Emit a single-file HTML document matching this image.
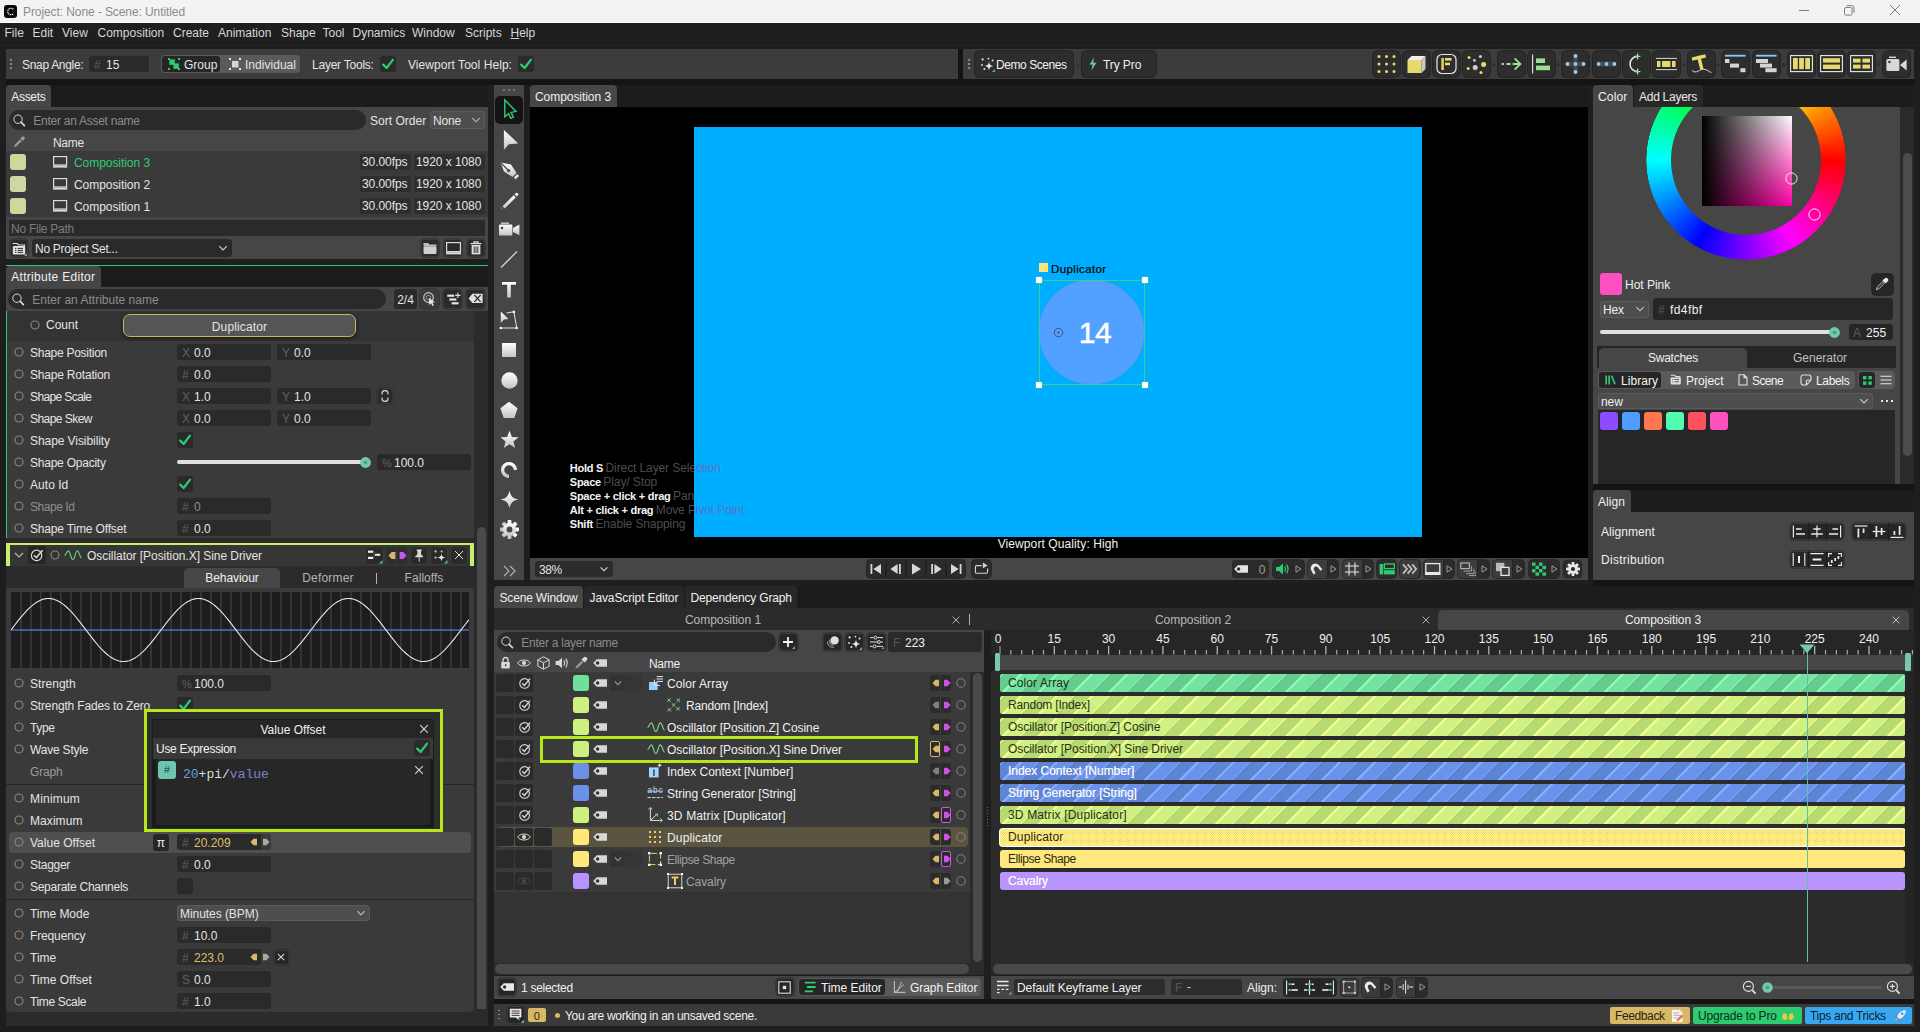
<!DOCTYPE html>
<html><head><meta charset="utf-8"><title>Cavalry</title>
<style>
html,body{margin:0;padding:0;}
body{width:1920px;height:1032px;background:#1e1e1e;position:relative;overflow:hidden;font-family:"Liberation Sans",sans-serif;font-size:12px;}
.b{position:absolute;box-sizing:border-box;display:block;}
.t{position:absolute;white-space:nowrap;line-height:16px;height:16px;font-size:12px;}
u{text-decoration:underline;text-underline-offset:1px;}
</style></head>
<body>
<!-- top -->
<div class="b" style="left:0px;top:0px;width:1920px;height:23px;background:#f3f3f3;"></div>
<svg class="b" style="left:4px;top:5px;" width="13" height="13" viewBox="0 0 13 13"><rect width="13" height="13" rx="3" fill="#0a0a0a"/><path d="M9.3 4.3 A3.2 3.2 0 1 0 9.3 8.7" fill="none" stroke="#fff" stroke-width="1.3" stroke-dasharray="1.2 0.7"/></svg>
<div class="t" style="top:3.5px;color:#8b8b8b;left:23px;letter-spacing:-0.089px;">Project: None - Scene: Untitled</div>
<div class="b" style="left:0px;top:22.3px;width:1920px;height:0.9px;background:#ffffff;"></div>
<svg class="b" style="left:1798px;top:5px;" width="12" height="12" viewBox="0 0 12 12"><path d="M1 5.5 H11" stroke="#7a7a7a" stroke-width="1"/></svg>
<svg class="b" style="left:1843px;top:4px;" width="12" height="12" viewBox="0 0 12 12"><rect x="1.5" y="3.5" width="7.6" height="7.6" rx="1.6" fill="none" stroke="#7a7a7a" stroke-width="1"/><path d="M3.6 1.6 H8.6 A2.4 2.4 0 0 1 11 4 V8.6" fill="none" stroke="#7a7a7a" stroke-width="1"/></svg>
<svg class="b" style="left:1889px;top:4px;" width="12" height="12" viewBox="0 0 12 12"><path d="M1 1 L11 11 M11 1 L1 11" stroke="#7a7a7a" stroke-width="1"/></svg>
<div class="b" style="left:0px;top:23.2px;width:1920px;height:19.3px;background:#1f1f1f;"></div>
<div class="b" style="left:0px;top:42.4px;width:1920px;height:0.9px;background:#191919;"></div>
<div class="t" style="top:25px;color:#d6d6d6;left:4.5px;">File</div>
<div class="t" style="top:25px;color:#d6d6d6;left:32.5px;">Edit</div>
<div class="t" style="top:25px;color:#d6d6d6;left:62px;">View</div>
<div class="t" style="top:25px;color:#d6d6d6;left:97.5px;">Composition</div>
<div class="t" style="top:25px;color:#d6d6d6;left:173px;">Create</div>
<div class="t" style="top:25px;color:#d6d6d6;left:218px;">Animation</div>
<div class="t" style="top:25px;color:#d6d6d6;left:281px;">Shape</div>
<div class="t" style="top:25px;color:#d6d6d6;left:322.5px;">Tool</div>
<div class="t" style="top:25px;color:#d6d6d6;left:352.5px;">Dynamics</div>
<div class="t" style="top:25px;color:#d6d6d6;left:412px;">Window</div>
<div class="t" style="top:25px;color:#d6d6d6;left:465px;">Scripts</div>
<div class="t" style="top:25px;color:#d6d6d6;left:510.5px;"><u>H</u>elp</div>
<div class="b" style="left:6px;top:49px;width:953px;height:30px;background:#3c3c3c;"></div>
<div class="b" style="left:6px;top:79px;width:1908px;height:6px;background:#141414;"></div>
<div class="b" style="left:10px;top:59px;width:2px;height:2px;background:#8a8a8a;"></div>
<div class="b" style="left:10px;top:63px;width:2px;height:2px;background:#8a8a8a;"></div>
<div class="b" style="left:10px;top:67px;width:2px;height:2px;background:#8a8a8a;"></div>
<div class="t" style="top:57px;color:#e4e4e4;left:22px;letter-spacing:-0.311px;">Snap Angle:</div>
<div class="b" style="left:89px;top:56px;width:60px;height:16px;background:#2a2a2a;border-radius:3px;"></div>
<div class="t" style="top:57px;color:#5c5c5c;left:94px;">#</div>
<div class="t" style="top:57px;color:#e4e4e4;left:106px;">15</div>
<div class="b" style="left:161px;top:55px;width:139px;height:18px;background:#5a5a5a;border-radius:4px;"></div>
<div class="b" style="left:162px;top:56px;width:58px;height:16px;background:#262626;border-radius:3px;"></div>
<svg class="b" style="left:167px;top:57px;" width="14" height="14" viewBox="0 0 14 14"><rect x="2.4" y="2.4" width="5.4" height="5.4" fill="#2ecc71"/><rect x="6.4" y="6.4" width="5.4" height="5.4" fill="#2ecc71"/><rect x="1" y="1" width="2" height="2" fill="#2ecc71"/><rect x="11" y="1" width="2" height="2" fill="#2ecc71"/><rect x="1" y="11" width="2" height="2" fill="#2ecc71"/><rect x="11" y="11" width="2" height="2" fill="#2ecc71"/></svg>
<div class="t" style="top:57px;color:#e4e4e4;left:184px;letter-spacing:-0.010px;">Group</div>
<svg class="b" style="left:228px;top:57px;" width="14" height="14" viewBox="0 0 14 14"><rect x="4" y="4" width="6.5" height="6.5" fill="#d4d4d4"/><rect x="1" y="1" width="2" height="2" fill="#e8e8e8"/><rect x="11" y="1" width="2" height="2" fill="#e8e8e8"/><rect x="1" y="11" width="2" height="2" fill="#e8e8e8"/><rect x="11" y="11" width="2" height="2" fill="#e8e8e8"/></svg>
<div class="t" style="top:57px;color:#e4e4e4;left:245px;letter-spacing:0.030px;">Individual</div>
<div class="t" style="top:57px;color:#e4e4e4;left:312px;letter-spacing:-0.232px;">Layer Tools:</div>
<div class="b" style="left:380px;top:56px;width:16px;height:16px;background:#2a2a2a;border-radius:3px;"></div>
<svg class="b" style="left:380px;top:56px;" width="16" height="16" viewBox="0 0 16 16"><path d="M3.2 8.6 L6.6 12 L13 3.6" fill="none" stroke="#2ecc71" stroke-width="2.2" stroke-linecap="round" stroke-linejoin="round"/></svg>
<div class="t" style="top:57px;color:#e4e4e4;left:408px;letter-spacing:0.055px;">Viewport Tool Help:</div>
<div class="b" style="left:518px;top:56px;width:16px;height:16px;background:#2a2a2a;border-radius:3px;"></div>
<svg class="b" style="left:518px;top:56px;" width="16" height="16" viewBox="0 0 16 16"><path d="M3.2 8.6 L6.6 12 L13 3.6" fill="none" stroke="#2ecc71" stroke-width="2.2" stroke-linecap="round" stroke-linejoin="round"/></svg>
<!-- toolbar2 -->
<div class="b" style="left:957.5px;top:49px;width:5.5px;height:30px;background:#141414;"></div>
<div class="b" style="left:963px;top:49px;width:951px;height:30px;background:#3c3c3c;"></div>
<div class="b" style="left:967.5px;top:59px;width:2px;height:2px;background:#8a8a8a;"></div>
<div class="b" style="left:967.5px;top:63px;width:2px;height:2px;background:#8a8a8a;"></div>
<div class="b" style="left:967.5px;top:67px;width:2px;height:2px;background:#8a8a8a;"></div>
<div class="b" style="left:975px;top:51px;width:98px;height:26px;background:#2d2d2d;border-radius:5px;box-shadow:0 0 0 1px #242424;"></div>
<svg class="b" style="left:980px;top:57px;" width="15" height="15" viewBox="0 0 15 15"><path d="M9 4.6 C9.4 7.6 10.4 8.6 13.4 9 C10.4 9.4 9.4 10.4 9 13.4 C8.6 10.4 7.6 9.4 4.6 9 C7.6 8.6 8.6 7.6 9 4.6 Z" fill="#e8e8e8"/><circle cx="2.6" cy="2.4" r="1.1" fill="#e8e8e8"/><circle cx="8.4" cy="1.6" r="0.9" fill="#e8e8e8"/><circle cx="12.6" cy="3.4" r="1" fill="#e8e8e8"/><circle cx="2" cy="8" r="0.9" fill="#e8e8e8"/><circle cx="4.4" cy="12" r="1" fill="#e8e8e8"/><path d="M15 12 V15 H12 Z" fill="#58b98a"/></svg>
<div class="t" style="top:57px;color:#f0f0f0;left:996px;letter-spacing:-0.443px;">Demo Scenes</div>
<div class="b" style="left:1076.5px;top:63.5px;width:2.4px;height:2.4px;background:#2a2a2a;border-radius:2px;"></div>
<div class="b" style="left:1082px;top:51px;width:74px;height:26px;background:#2d2d2d;border-radius:5px;box-shadow:0 0 0 1px #242424;"></div>
<svg class="b" style="left:1088px;top:57px;" width="10" height="14" viewBox="0 0 10 14"><path d="M6 0.5 L1.6 7.6 H4.6 L3.4 13.5 L8.4 5.8 H5.2 Z" fill="#6dc9a8"/></svg>
<div class="t" style="top:57px;color:#f0f0f0;left:1103px;letter-spacing:-0.098px;">Try Pro</div>
<div class="b" style="left:1492.2px;top:63.3px;width:2.4px;height:2.4px;background:#2a2a2a;border-radius:2px;"></div>
<div class="b" style="left:1557.3999999999999px;top:63.3px;width:2.4px;height:2.4px;background:#2a2a2a;border-radius:2px;"></div>
<div class="b" style="left:1682.2px;top:63.3px;width:2.4px;height:2.4px;background:#2a2a2a;border-radius:2px;"></div>
<div class="b" style="left:1717.0px;top:63.3px;width:2.4px;height:2.4px;background:#2a2a2a;border-radius:2px;"></div>
<div class="b" style="left:1782.2px;top:63.3px;width:2.4px;height:2.4px;background:#2a2a2a;border-radius:2px;"></div>
<div class="b" style="left:1877.2px;top:63.3px;width:2.4px;height:2.4px;background:#2a2a2a;border-radius:2px;"></div>
<div class="b" style="left:1372.5px;top:51px;width:27px;height:26px;background:#2d2d2d;border-radius:5px;box-shadow:0 0 0 1px #242424;"></div>
<div class="b" style="left:1402.5px;top:51px;width:27px;height:26px;background:#2d2d2d;border-radius:5px;box-shadow:0 0 0 1px #242424;"></div>
<div class="b" style="left:1432.7px;top:51px;width:27px;height:26px;background:#2d2d2d;border-radius:5px;box-shadow:0 0 0 1px #242424;"></div>
<div class="b" style="left:1462.8px;top:51px;width:27px;height:26px;background:#2d2d2d;border-radius:5px;box-shadow:0 0 0 1px #242424;"></div>
<div class="b" style="left:1497.5px;top:51px;width:27px;height:26px;background:#2d2d2d;border-radius:5px;box-shadow:0 0 0 1px #242424;"></div>
<div class="b" style="left:1527.6px;top:51px;width:27px;height:26px;background:#2d2d2d;border-radius:5px;box-shadow:0 0 0 1px #242424;"></div>
<div class="b" style="left:1562.3px;top:51px;width:27px;height:26px;background:#2d2d2d;border-radius:5px;box-shadow:0 0 0 1px #242424;"></div>
<div class="b" style="left:1592.5px;top:51px;width:27px;height:26px;background:#2d2d2d;border-radius:5px;box-shadow:0 0 0 1px #242424;"></div>
<div class="b" style="left:1622.5px;top:51px;width:27px;height:26px;background:#2d2d2d;border-radius:5px;box-shadow:0 0 0 1px #242424;"></div>
<div class="b" style="left:1652.6px;top:51px;width:27px;height:26px;background:#2d2d2d;border-radius:5px;box-shadow:0 0 0 1px #242424;"></div>
<div class="b" style="left:1687.7px;top:51px;width:27px;height:26px;background:#2d2d2d;border-radius:5px;box-shadow:0 0 0 1px #242424;"></div>
<div class="b" style="left:1722.4px;top:51px;width:27px;height:26px;background:#2d2d2d;border-radius:5px;box-shadow:0 0 0 1px #242424;"></div>
<div class="b" style="left:1752.6px;top:51px;width:27px;height:26px;background:#2d2d2d;border-radius:5px;box-shadow:0 0 0 1px #242424;"></div>
<div class="b" style="left:1787.7px;top:51px;width:27px;height:26px;background:#2d2d2d;border-radius:5px;box-shadow:0 0 0 1px #242424;"></div>
<div class="b" style="left:1817.7px;top:51px;width:27px;height:26px;background:#2d2d2d;border-radius:5px;box-shadow:0 0 0 1px #242424;"></div>
<div class="b" style="left:1847.7px;top:51px;width:27px;height:26px;background:#2d2d2d;border-radius:5px;box-shadow:0 0 0 1px #242424;"></div>
<div class="b" style="left:1882.7px;top:51px;width:27px;height:26px;background:#2d2d2d;border-radius:5px;box-shadow:0 0 0 1px #242424;"></div>
<svg class="b" style="left:1372.5px;top:51px;" width="27" height="26" viewBox="0 0 27 26"><circle cx="6.0" cy="5.6" r="1.5" fill="#e8d870"/><circle cx="13.5" cy="5.6" r="1.5" fill="#e8d870"/><circle cx="21.0" cy="5.6" r="1.5" fill="#e8d870"/><circle cx="6.0" cy="13.0" r="1.5" fill="#e8d870"/><circle cx="13.5" cy="13.0" r="1.5" fill="#e8d870"/><circle cx="21.0" cy="13.0" r="1.5" fill="#e8d870"/><circle cx="6.0" cy="20.4" r="1.5" fill="#e8d870"/><circle cx="13.5" cy="20.4" r="1.5" fill="#e8d870"/><circle cx="21.0" cy="20.4" r="1.5" fill="#e8d870"/></svg>
<svg class="b" style="left:1402.5px;top:51px;" width="27" height="26" viewBox="0 0 27 26"><path d="M4.5 9 L8.5 5 H22.5 L18.5 9 Z" fill="#f0f0f0"/><path d="M18.5 9 L22.5 5 V18 L18.5 22 Z" fill="#c8c8c8"/><rect x="4.5" y="9" width="14" height="13" fill="#e8d870"/></svg>
<svg class="b" style="left:1432.7px;top:51px;" width="27" height="26" viewBox="0 0 27 26"><rect x="4" y="3.5" width="19" height="19" rx="5" fill="none" stroke="#e8e8e8" stroke-width="1.2"/><rect x="8.4" y="7" width="2.4" height="12" fill="#e8d870"/><rect x="12" y="7" width="6.6" height="2.6" fill="#e8d870"/><rect x="12" y="11.6" width="5" height="2.6" fill="#e8d870"/></svg>
<svg class="b" style="left:1462.8px;top:51px;" width="27" height="26" viewBox="0 0 27 26"><circle cx="6" cy="6.6" r="1.5" fill="#e8d870"/><circle cx="17.4" cy="5.6" r="1.5" fill="#d0d0d0"/><circle cx="11.4" cy="9.4" r="1.4" fill="#d0d0d0"/><circle cx="20.6" cy="13.4" r="2.5" fill="#e8d870"/><circle cx="12.2" cy="16.6" r="2.5" fill="#d0d0d0"/><circle cx="5.2" cy="17.6" r="1.5" fill="#e8d870"/><circle cx="18" cy="21.6" r="1.5" fill="#e8d870"/></svg>
<svg class="b" style="left:1497.5px;top:51px;" width="27" height="26" viewBox="0 0 27 26"><path d="M3.5 13 H6 M8.4 13 H12.6 M14.6 13 H22" stroke="#98e098" stroke-width="1.8"/><path d="M16.6 7.4 L22.4 13 L16.6 18.6" fill="none" stroke="#98e098" stroke-width="1.8"/></svg>
<svg class="b" style="left:1527.6px;top:51px;" width="27" height="26" viewBox="0 0 27 26"><path d="M4.6 3.4 V22.6" stroke="#e8e8e8" stroke-width="1.1"/><rect x="8" y="7.4" width="9" height="4.6" fill="#98e098"/><rect x="8" y="14.6" width="14" height="4.6" fill="#98e098"/></svg>
<svg class="b" style="left:1562.3px;top:51px;" width="27" height="26" viewBox="0 0 27 26"><rect x="11.1" y="3" width="4.8" height="20" rx="2.4" fill="#484848"/><rect x="3.5" y="10.6" width="20" height="4.8" rx="2.4" fill="#484848"/><circle cx="13.5" cy="5" r="1.9" fill="#90c8ff"/><circle cx="13.5" cy="13" r="1.9" fill="#90c8ff"/><circle cx="13.5" cy="21" r="1.9" fill="#90c8ff"/><circle cx="5.5" cy="13" r="1.9" fill="#90c8ff"/><circle cx="21.5" cy="13" r="1.9" fill="#90c8ff"/></svg>
<svg class="b" style="left:1592.5px;top:51px;" width="27" height="26" viewBox="0 0 27 26"><rect x="3.5" y="10.6" width="20" height="4.8" rx="2.4" fill="#484848"/><circle cx="5.6" cy="13" r="1.9" fill="#90c8ff"/><circle cx="13.5" cy="13" r="1.9" fill="#90c8ff"/><circle cx="21.4" cy="13" r="1.9" fill="#90c8ff"/></svg>
<svg class="b" style="left:1622.5px;top:51px;" width="27" height="26" viewBox="0 0 27 26"><path d="M14.6 5.4 A7.6 7.6 0 0 0 14.6 20.6" fill="none" stroke="#e0e0e0" stroke-width="1.6"/><path d="M14.6 2.4 V8.4 M11.8 5.4 H17.4 M14.6 17.6 V23.6 M11.8 20.6 H17.4" stroke="#98e098" stroke-width="1.3"/></svg>
<svg class="b" style="left:1652.6px;top:51px;" width="27" height="26" viewBox="0 0 27 26"><path d="M3 7.4 H24 M3 18.6 H24" stroke="#e8e8e8" stroke-width="0.9"/><rect x="4" y="10" width="3.4" height="6" fill="#e8d870"/><rect x="9" y="10" width="8.4" height="6" fill="#e8d870"/><rect x="19" y="10" width="3.6" height="6" fill="#e8d870"/></svg>
<svg class="b" style="left:1687.7px;top:51px;" width="27" height="26" viewBox="0 0 27 26"><g transform="rotate(-14 13 11)"><rect x="5" y="4.4" width="14" height="3.4" fill="#e8d870"/><rect x="10.4" y="4.4" width="3.4" height="14" fill="#e8d870"/></g><path d="M4 19.4 C8 24 12 17 17 18.4 C20 19.2 21 21 23.4 21.4" fill="none" stroke="#d8d8d8" stroke-width="1"/></svg>
<svg class="b" style="left:1722.4px;top:51px;" width="27" height="26" viewBox="0 0 27 26"><rect x="3" y="3.8" width="20.6" height="1.8" fill="#90c8ff"/><rect x="3" y="8" width="4.4" height="4" fill="#d4d4d4"/><rect x="8" y="12.6" width="9" height="4" fill="#d4d4d4"/><rect x="18.4" y="17.2" width="5" height="4" fill="#d4d4d4"/></svg>
<svg class="b" style="left:1752.6px;top:51px;" width="27" height="26" viewBox="0 0 27 26"><rect x="3" y="3.8" width="20.6" height="1.8" fill="#90c8ff"/><rect x="3" y="8" width="12" height="4" fill="#d4d4d4"/><rect x="7" y="12.6" width="12" height="4" fill="#d4d4d4"/><rect x="12.4" y="17.2" width="11.2" height="4" fill="#d4d4d4"/></svg>
<svg class="b" style="left:1787.7px;top:51px;" width="27" height="26" viewBox="0 0 27 26"><rect x="2.6" y="4.6" width="21.8" height="16" fill="none" stroke="#e8e8e8" stroke-width="1.1"/><rect x="5" y="7" width="4.8" height="11.2" fill="#e8d870"/><rect x="11.1" y="7" width="4.8" height="11.2" fill="#e8d870"/><rect x="17.2" y="7" width="4.8" height="11.2" fill="#e8d870"/></svg>
<svg class="b" style="left:1817.7px;top:51px;" width="27" height="26" viewBox="0 0 27 26"><rect x="2.6" y="4.6" width="21.8" height="16" fill="none" stroke="#e8e8e8" stroke-width="1.1"/><rect x="5" y="7.2" width="17" height="4.4" fill="#e8d870"/><rect x="5" y="13.6" width="17" height="4.4" fill="#e8d870"/></svg>
<svg class="b" style="left:1847.7px;top:51px;" width="27" height="26" viewBox="0 0 27 26"><rect x="2.6" y="4.6" width="21.8" height="16" fill="none" stroke="#e8e8e8" stroke-width="1.1"/><rect x="5" y="7.6" width="7.6" height="4" fill="#e8d870"/><rect x="5" y="13.6" width="7.6" height="4" fill="#e8d870"/><rect x="14.4" y="7.6" width="7.6" height="4" fill="#e8d870"/><rect x="14.4" y="13.6" width="7.6" height="4" fill="#e8d870"/></svg>
<svg class="b" style="left:1882.7px;top:51px;" width="27" height="26" viewBox="0 0 27 26"><rect x="3.4" y="8" width="13" height="12" rx="1.6" fill="#d8d8d8"/><path d="M17 14 L23.6 8.6 V19.4 Z" fill="#d8d8d8"/><rect x="6" y="5.6" width="7" height="1.4" fill="#d8d8d8"/><circle cx="6.4" cy="11" r="1.2" fill="#2d2d2d"/></svg>
<!-- left -->
<div class="b" style="left:6px;top:85px;width:482px;height:22px;background:#1c1c1c;"></div>
<div class="b" style="left:6px;top:85px;width:45px;height:22px;background:#464646;border-radius:4px 4px 0 0;"></div>
<div class="t" style="top:88.5px;color:#f0f0f0;left:11.3px;letter-spacing:-0.335px;">Assets</div>
<div class="b" style="left:6px;top:107px;width:482px;height:152px;background:#464646;"></div>
<div class="b" style="left:9px;top:110px;width:357px;height:20px;background:#2a2a2a;border-radius:10.0px;"></div>
<svg class="b" style="left:12px;top:112px;" width="16" height="16" viewBox="0 0 16 16"><circle cx="6" cy="7.2" r="4.2" fill="none" stroke="#d8d8d8" stroke-width="1"/><path d="M9.2 10.4 L12.4 13.6" stroke="#d8d8d8" stroke-width="1.7" stroke-linecap="round"/></svg>
<div class="t" style="top:113px;color:#8c8c8c;left:33.3px;letter-spacing:-0.263px;">Enter an Asset name</div>
<div class="t" style="top:112.5px;color:#e4e4e4;left:370px;letter-spacing:0.028px;">Sort Order</div>
<div class="b" style="left:430px;top:111px;width:55px;height:18px;background:#4e4e4e;border-radius:3px;border:1px solid #5c5c5c;"></div>
<div class="t" style="top:112.5px;color:#e4e4e4;left:433px;letter-spacing:-0.172px;">None</div>
<svg class="b" style="left:468px;top:112px;" width="16" height="16" viewBox="0 0 16 16"><path d="M4.4 6.2 L8 9.8 L11.6 6.2" stroke="#bdbdbd" stroke-width="1.1" fill="none"/></svg>
<svg class="b" style="left:12px;top:135px;" width="14" height="14" viewBox="0 0 14 14"><path d="M2 12 L2.6 10 L8 4.6 L9.6 6.2 L4.2 11.6 Z" fill="#9a9a9a"/><path d="M8.2 3.6 L10.6 6 L12.4 4.2 A1.7 1.7 0 0 0 10 1.8 Z" fill="#9a9a9a"/></svg>
<div class="t" style="top:134.5px;color:#e4e4e4;left:53px;letter-spacing:-0.302px;">Name</div>
<div class="b" style="left:6px;top:151px;width:482px;height:66px;background:#3a3a3a;"></div>
<div class="b" style="left:10px;top:154px;width:16px;height:16px;background:#cdd7a2;border-radius:3px;"></div>
<svg class="b" style="left:53px;top:156px;" width="15" height="12" viewBox="0 0 15 12"><rect x="0.6" y="0.6" width="13" height="8.4" fill="none" stroke="#dcdcdc" stroke-width="1.2"/><rect x="0" y="9.6" width="14.2" height="2" fill="#dcdcdc"/></svg>
<div class="t" style="top:154.5px;color:#2ecc71;left:74px;letter-spacing:-0.054px;">Composition 3</div>
<div class="b" style="left:360px;top:154px;width:51px;height:16px;background:#2e2e2e;border-radius:2px;"></div>
<div class="t" style="top:154px;color:#e4e4e4;left:362px;letter-spacing:-0.067px;">30.00fps</div>
<div class="b" style="left:414px;top:154px;width:71px;height:16px;background:#2e2e2e;border-radius:2px;"></div>
<div class="t" style="top:154px;color:#e4e4e4;left:416px;letter-spacing:-0.069px;">1920 x 1080</div>
<div class="b" style="left:10px;top:176px;width:16px;height:16px;background:#cdd7a2;border-radius:3px;"></div>
<svg class="b" style="left:53px;top:178px;" width="15" height="12" viewBox="0 0 15 12"><rect x="0.6" y="0.6" width="13" height="8.4" fill="none" stroke="#dcdcdc" stroke-width="1.2"/><rect x="0" y="9.6" width="14.2" height="2" fill="#dcdcdc"/></svg>
<div class="t" style="top:176.5px;color:#e4e4e4;left:74px;letter-spacing:-0.054px;">Composition 2</div>
<div class="b" style="left:360px;top:176px;width:51px;height:16px;background:#2e2e2e;border-radius:2px;"></div>
<div class="t" style="top:176px;color:#e4e4e4;left:362px;letter-spacing:-0.067px;">30.00fps</div>
<div class="b" style="left:414px;top:176px;width:71px;height:16px;background:#2e2e2e;border-radius:2px;"></div>
<div class="t" style="top:176px;color:#e4e4e4;left:416px;letter-spacing:-0.069px;">1920 x 1080</div>
<div class="b" style="left:10px;top:198px;width:16px;height:16px;background:#cdd7a2;border-radius:3px;"></div>
<svg class="b" style="left:53px;top:200px;" width="15" height="12" viewBox="0 0 15 12"><rect x="0.6" y="0.6" width="13" height="8.4" fill="none" stroke="#dcdcdc" stroke-width="1.2"/><rect x="0" y="9.6" width="14.2" height="2" fill="#dcdcdc"/></svg>
<div class="t" style="top:198.5px;color:#e4e4e4;left:74px;letter-spacing:-0.054px;">Composition 1</div>
<div class="b" style="left:360px;top:198px;width:51px;height:16px;background:#2e2e2e;border-radius:2px;"></div>
<div class="t" style="top:198px;color:#e4e4e4;left:362px;letter-spacing:-0.067px;">30.00fps</div>
<div class="b" style="left:414px;top:198px;width:71px;height:16px;background:#2e2e2e;border-radius:2px;"></div>
<div class="t" style="top:198px;color:#e4e4e4;left:416px;letter-spacing:-0.069px;">1920 x 1080</div>
<div class="b" style="left:9px;top:220px;width:476px;height:16px;background:#2a2a2a;"></div>
<div class="t" style="top:220.5px;color:#7c7c7c;left:11px;letter-spacing:-0.252px;">No File Path</div>
<div class="b" style="left:10px;top:239px;width:18px;height:18px;background:#2a2a2a;border-radius:4px;box-shadow:inset 0 0 0 0.9px #3c3c3c, 0 0 0 0.5px #242424;"></div>
<svg class="b" style="left:12px;top:241px;" width="15" height="15" viewBox="0 0 15 15"><path d="M0.5 2.5 H5 L6.5 4 H12.5 V5" fill="none" stroke="#e0e0e0" stroke-width="1.2"/><rect x="0.8" y="5" width="12.4" height="8.4" rx="1" fill="#e0e0e0"/><path d="M3 7.4 H4.4 M5.6 7.4 H11 M3 9.4 H4.4 M5.6 9.4 H11 M3 11.4 H4.4 M5.6 11.4 H11" stroke="#2a2a2a" stroke-width="1"/><path d="M15 12 V15 H12 Z" fill="#58b98a"/></svg>
<div class="b" style="left:32px;top:239px;width:200px;height:18px;background:#2a2a2a;border-radius:3px;"></div>
<div class="t" style="top:240.5px;color:#e4e4e4;left:35px;letter-spacing:-0.275px;">No Project Set...</div>
<svg class="b" style="left:215px;top:240px;" width="16" height="16" viewBox="0 0 16 16"><path d="M4.2 6.1 L8 9.9 L11.8 6.1" stroke="#d0d0d0" stroke-width="1.2" fill="none"/></svg>
<div class="b" style="left:421px;top:239px;width:18px;height:18px;background:#2a2a2a;border-radius:4px;box-shadow:inset 0 0 0 0.9px #3c3c3c, 0 0 0 0.5px #242424;"></div>
<div class="b" style="left:444px;top:239px;width:18px;height:18px;background:#2a2a2a;border-radius:4px;box-shadow:inset 0 0 0 0.9px #3c3c3c, 0 0 0 0.5px #242424;"></div>
<div class="b" style="left:467px;top:239px;width:18px;height:18px;background:#2a2a2a;border-radius:4px;box-shadow:inset 0 0 0 0.9px #3c3c3c, 0 0 0 0.5px #242424;"></div>
<svg class="b" style="left:423px;top:241px;" width="14" height="14" viewBox="0 0 14 14"><path d="M0.5 2 H5 L6.5 3.6 H13.5 V5 H0.5 Z" fill="#bdbdbd"/><rect x="0.5" y="5.2" width="13" height="7.8" rx="0.8" fill="#cfcfcf"/></svg>
<svg class="b" style="left:445.5px;top:241.5px;" width="15" height="13" viewBox="0 0 15 13"><rect x="0.6" y="0.6" width="13.8" height="9" fill="none" stroke="#dcdcdc" stroke-width="1.2"/><rect x="0" y="10.2" width="15" height="2.2" fill="#dcdcdc"/></svg>
<svg class="b" style="left:470px;top:241px;" width="12" height="14" viewBox="0 0 12 14"><path d="M0.5 2.6 H11.5 M4 2.4 V0.8 H8 V2.4" stroke="#dcdcdc" stroke-width="1.3" fill="none"/><path d="M1.6 4 H10.4 V13.4 H1.6 Z" fill="#dcdcdc"/><path d="M4.2 5.5 V12 M6 5.5 V12 M7.8 5.5 V12" stroke="#2a2a2a" stroke-width="0.9"/></svg>
<div class="b" style="left:494px;top:85px;width:30px;height:495px;background:#464646;"></div>
<div class="b" style="left:503px;top:89px;width:2px;height:2px;background:#767676;"></div>
<div class="b" style="left:508px;top:89px;width:2px;height:2px;background:#767676;"></div>
<div class="b" style="left:513px;top:89px;width:2px;height:2px;background:#767676;"></div>
<div class="b" style="left:495px;top:96px;width:28px;height:28px;background:#141414;border-radius:5px;"></div>
<svg class="b" width="0" height="0"><defs><linearGradient id="tg" x1="0" y1="0" x2="0" y2="1"><stop offset="0" stop-color="#ffffff"/><stop offset="1" stop-color="#c4c4c4"/></linearGradient></defs></svg>
<svg class="b" style="left:499px;top:98px;" width="22" height="24" viewBox="0 0 22 24"><path d="M5.8 2 V18.8 L9.6 15.6 L11.8 20.4 L14.4 19.2 L12.2 14.4 L17 13.4 Z" fill="none" stroke="#2ecc71" stroke-width="1.4" stroke-linejoin="miter"/></svg>
<svg class="b" style="left:499px;top:128px;" width="22" height="24" viewBox="0 0 22 24"><path d="M4.9 2 V21.8 L9.8 16.2 L19.3 15.5 Z" fill="url(#tg)"/></svg>
<svg class="b" style="left:498px;top:158px;" width="24" height="24" viewBox="0 0 24 24"><path d="M2.5 4.5 L13 6.5 L18.5 15 L14.5 19 L6 13.5 Z" fill="url(#tg)"/><path d="M2.5 4.5 L10 12" stroke="#464646" stroke-width="1.2"/><circle cx="10.6" cy="12.6" r="1.6" fill="#464646"/><path d="M15.8 19.6 L19.2 16.2 L21 18 L17.6 21.4 Z" fill="url(#tg)"/></svg>
<svg class="b" style="left:498px;top:188px;" width="24" height="24" viewBox="0 0 24 24"><path d="M2.6 20.4 L3.6 19.4 L4.4 20.2 Z" fill="#d0d0d0"/><path d="M4.6 18.2 L15.6 7.2 L17.8 9.4 L6.8 20.4 Z" fill="url(#tg)"/><path d="M16.4 6.4 L17.6 5.2 A1.7 1.7 0 0 1 20 7.6 L18.6 8.6 Z" fill="url(#tg)"/></svg>
<svg class="b" style="left:498px;top:220px;" width="24" height="18" viewBox="0 0 24 18"><rect x="1" y="4.4" width="13.4" height="11.2" rx="1.2" fill="url(#tg)"/><path d="M15 8 L21.4 4.6 V15.2 L15 12 Z" fill="url(#tg)"/><rect x="3" y="2.6" width="8" height="1.2" fill="#e4e4e4"/><circle cx="4" cy="8" r="1.3" fill="#464646"/></svg>
<svg class="b" style="left:498px;top:248px;" width="24" height="24" viewBox="0 0 24 24"><path d="M3 19.5 L19 3.5" stroke="#d4d4d4" stroke-width="1.3"/></svg>
<svg class="b" style="left:500px;top:280px;" width="20" height="20" viewBox="0 0 20 20"><path d="M2 2 H16 V4.8 H10.8 V17.5 H7.2 V4.8 H2 Z" fill="url(#tg)"/></svg>
<svg class="b" style="left:498px;top:309px;" width="24" height="24" viewBox="0 0 24 24"><path d="M2.8 2.6 V14 L6 10.6 L10.6 10 Z" fill="url(#tg)"/><path d="M8.4 4 L15.8 2.8 L18.8 19 L2.8 19" fill="none" stroke="#e4e4e4" stroke-width="1"/><rect x="14.8" y="1.8" width="2.2" height="2.2" fill="#fff"/><rect x="17.6" y="17.9" width="2.2" height="2.2" fill="#fff"/><rect x="1.7" y="17.9" width="2.2" height="2.2" fill="#fff"/></svg>
<svg class="b" style="left:502.3px;top:343px;" width="14" height="14" viewBox="0 0 14 14"><rect width="14" height="14" fill="url(#tg)"/></svg>
<svg class="b" style="left:500.5px;top:371.5px;" width="17" height="17" viewBox="0 0 17 17"><circle cx="8.5" cy="8.5" r="8.2" fill="url(#tg)"/></svg>
<svg class="b" style="left:500px;top:400.5px;" width="18" height="18" viewBox="0 0 18 18"><path d="M9 0.8 L17.6 7.2 L14.3 17 H3.7 L0.4 7.2 Z" fill="url(#tg)"/></svg>
<svg class="b" style="left:499.5px;top:430px;" width="19" height="19" viewBox="0 0 19 19"><path d="M9.5 0.8 L11.9 7 L18.6 7.3 L13.4 11.5 L15.2 18 L9.5 14.3 L3.8 18 L5.6 11.5 L0.4 7.3 L7.1 7 Z" fill="url(#tg)"/></svg>
<svg class="b" style="left:500px;top:461px;" width="18" height="18" viewBox="0 0 18 18"><path d="M15.4 9 A6.4 6.4 0 1 0 9 15.4" fill="none" stroke="url(#tg)" stroke-width="3.3"/></svg>
<svg class="b" style="left:499.5px;top:490px;" width="19" height="19" viewBox="0 0 19 19"><path d="M9.5 0.5 C10.4 6 13 8.6 18.5 9.5 C13 10.4 10.4 13 9.5 18.5 C8.6 13 6 10.4 0.5 9.5 C6 8.6 8.6 6 9.5 0.5 Z" fill="url(#tg)"/></svg>
<svg class="b" style="left:499.5px;top:520px;" width="19" height="19" viewBox="0 0 19 19"><rect x="7.6" y="0" width="3.8" height="19" rx="0.8" transform="rotate(0 9.5 9.5)" fill="url(#tg)"/><rect x="7.6" y="0" width="3.8" height="19" rx="0.8" transform="rotate(45 9.5 9.5)" fill="url(#tg)"/><rect x="7.6" y="0" width="3.8" height="19" rx="0.8" transform="rotate(90 9.5 9.5)" fill="url(#tg)"/><rect x="7.6" y="0" width="3.8" height="19" rx="0.8" transform="rotate(135 9.5 9.5)" fill="url(#tg)"/><circle cx="9.5" cy="9.5" r="6.6" fill="url(#tg)"/><circle cx="9.5" cy="9.5" r="2.9" fill="#464646"/></svg>
<svg class="b" style="left:502.6px;top:565px;" width="14" height="12" viewBox="0 0 14 12"><path d="M1 1 L6 6 L1 11 M7 1 L12 6 L7 11" fill="none" stroke="#b0b0b0" stroke-width="1.2"/></svg>
<!-- attred -->
<div class="b" style="left:6px;top:265px;width:482px;height:1px;background:#2ecc71;"></div>
<div class="b" style="left:6px;top:266px;width:482px;height:21px;background:#1c1c1c;"></div>
<div class="b" style="left:6px;top:266px;width:95px;height:21px;background:#464646;border-radius:4px 4px 0 0;"></div>
<div class="t" style="top:269px;color:#f0f0f0;left:11.3px;letter-spacing:0.289px;">Attribute Editor</div>
<div class="b" style="left:6px;top:287px;width:482px;height:24px;background:#464646;"></div>
<div class="b" style="left:8px;top:289px;width:378px;height:20px;background:#2a2a2a;border-radius:10.0px;"></div>
<svg class="b" style="left:11px;top:291px;" width="16" height="16" viewBox="0 0 16 16"><circle cx="6" cy="7.2" r="4.2" fill="none" stroke="#d8d8d8" stroke-width="1"/><path d="M9.2 10.4 L12.4 13.6" stroke="#d8d8d8" stroke-width="1.7" stroke-linecap="round"/></svg>
<div class="t" style="top:292px;color:#8c8c8c;left:32.3px;letter-spacing:0.014px;">Enter an Attribute name</div>
<div class="b" style="left:394px;top:289px;width:23px;height:20px;background:#2a2a2a;border-radius:3px;"></div>
<div class="t" style="top:291.5px;color:#e4e4e4;left:405.5px;transform:translateX(-50%);">2/4</div>
<div class="b" style="left:420.2px;top:289.2px;width:19px;height:19.4px;background:#3a3a3a;border-radius:4px;box-shadow:inset 0 0 0 0.9px #3c3c3c, 0 0 0 0.5px #242424;"></div>
<div class="b" style="left:443.3px;top:289.2px;width:19.2px;height:19.4px;background:#2a2a2a;border-radius:4px;box-shadow:inset 0 0 0 0.9px #3c3c3c, 0 0 0 0.5px #242424;"></div>
<div class="b" style="left:465.5px;top:289.2px;width:19px;height:19.4px;background:#2a2a2a;border-radius:4px;box-shadow:inset 0 0 0 0.9px #3c3c3c, 0 0 0 0.5px #242424;"></div>
<svg class="b" style="left:422px;top:291px;" width="16" height="16" viewBox="0 0 16 16"><circle cx="6.5" cy="6.5" r="4.8" fill="none" stroke="#c8c8c8" stroke-width="1.2"/><circle cx="6.5" cy="6.5" r="2.2" fill="none" stroke="#9a9a9a" stroke-width="1"/><path d="M7 7 V14 L9 12.2 L10.4 15 L11.8 14.3 L10.5 11.6 L13 11.2 Z" fill="#e8e8e8"/></svg>
<svg class="b" style="left:445.6px;top:292px;" width="16" height="14" viewBox="0 0 16 14"><rect x="1.2" y="2.6" width="7" height="2.2" fill="#e4e4e4"/><rect x="3.4" y="6.4" width="7" height="2.2" fill="#e4e4e4"/><rect x="5.6" y="10.2" width="7" height="2.2" fill="#e4e4e4"/><path d="M11.8 0.8 V6 M9.2 3.4 H14.4" stroke="#e4e4e4" stroke-width="1.1"/></svg>
<svg class="b" style="left:467.6px;top:293.4px;" width="16" height="12" viewBox="0 0 16 12"><path d="M0.6 5.4 L4.4 0.8 H14.6 V10 H4.4 Z" fill="#e0e0e0"/><path d="M6.4 2 L12.6 8.8 M12.6 2 L6.4 8.8" stroke="#2a2a2a" stroke-width="1.2"/></svg>
<div class="b" style="left:474px;top:311px;width:14px;height:715px;background:#2b2b2b;"></div>
<div class="b" style="left:476.5px;top:527px;width:9.5px;height:494px;background:#4a4a4a;border-radius:5px;"></div>
<div class="b" style="left:6px;top:1009px;width:482px;height:17px;background:#2b2b2b;"></div>
<div class="b" style="left:6px;top:311px;width:1px;height:227px;background:#2ecc71;"></div>
<div class="b" style="left:7px;top:311px;width:467px;height:30px;background:#333333;"></div>
<svg class="b" style="left:29px;top:318.5px;" width="12" height="12" viewBox="0 0 12 12"><circle cx="6" cy="6" r="4" fill="none" stroke="#8a8a8a" stroke-width="1.1"/></svg>
<div class="t" style="top:317px;color:#e4e4e4;left:46px;letter-spacing:-0.004px;">Count</div>
<div class="b" style="left:123px;top:314px;width:233px;height:23px;background:#555555;border-radius:7px;border:1px solid #c9b75c;box-shadow:0 2px 5px rgba(0,0,0,.45);"></div>
<div class="t" style="top:318.5px;color:#e4e4e4;left:239.5px;transform:translateX(-50%);letter-spacing:0.148px;">Duplicator</div>
<div class="b" style="left:7px;top:341px;width:467px;height:197px;background:#3a3a3a;"></div>
<svg class="b" style="left:13px;top:345.5px;" width="12" height="12" viewBox="0 0 12 12"><circle cx="6" cy="6" r="4" fill="none" stroke="#8a8a8a" stroke-width="1.1"/></svg>
<div class="t" style="top:344.5px;color:#e4e4e4;left:30px;letter-spacing:-0.266px;">Shape Position</div>
<div class="b" style="left:177px;top:344px;width:94px;height:16px;background:#2a2a2a;border-radius:3px;"></div>
<div class="t" style="top:344.8px;color:#606060;left:182px;">X</div>
<div class="t" style="top:344.8px;color:#e4e4e4;left:194px;">0.0</div>
<div class="b" style="left:277px;top:344px;width:94px;height:16px;background:#2a2a2a;border-radius:3px;"></div>
<div class="t" style="top:344.8px;color:#606060;left:282px;">Y</div>
<div class="t" style="top:344.8px;color:#e4e4e4;left:294px;">0.0</div>
<svg class="b" style="left:13px;top:367.5px;" width="12" height="12" viewBox="0 0 12 12"><circle cx="6" cy="6" r="4" fill="none" stroke="#8a8a8a" stroke-width="1.1"/></svg>
<div class="t" style="top:366.5px;color:#e4e4e4;left:30px;letter-spacing:-0.195px;">Shape Rotation</div>
<div class="b" style="left:177px;top:366px;width:94px;height:16px;background:#2a2a2a;border-radius:3px;"></div>
<div class="t" style="top:366.8px;color:#606060;left:182px;">#</div>
<div class="t" style="top:366.8px;color:#e4e4e4;left:194px;">0.0</div>
<svg class="b" style="left:13px;top:389.5px;" width="12" height="12" viewBox="0 0 12 12"><circle cx="6" cy="6" r="4" fill="none" stroke="#8a8a8a" stroke-width="1.1"/></svg>
<div class="t" style="top:388.5px;color:#e4e4e4;left:30px;letter-spacing:-0.614px;">Shape Scale</div>
<div class="b" style="left:177px;top:388px;width:94px;height:16px;background:#2a2a2a;border-radius:3px;"></div>
<div class="t" style="top:388.8px;color:#606060;left:182px;">X</div>
<div class="t" style="top:388.8px;color:#e4e4e4;left:194px;">1.0</div>
<div class="b" style="left:277px;top:388px;width:94px;height:16px;background:#2a2a2a;border-radius:3px;"></div>
<div class="t" style="top:388.8px;color:#606060;left:282px;">Y</div>
<div class="t" style="top:388.8px;color:#e4e4e4;left:294px;">1.0</div>
<svg class="b" style="left:13px;top:411.5px;" width="12" height="12" viewBox="0 0 12 12"><circle cx="6" cy="6" r="4" fill="none" stroke="#8a8a8a" stroke-width="1.1"/></svg>
<div class="t" style="top:410.5px;color:#e4e4e4;left:30px;letter-spacing:-0.538px;">Shape Skew</div>
<div class="b" style="left:177px;top:410px;width:94px;height:16px;background:#2a2a2a;border-radius:3px;"></div>
<div class="t" style="top:410.8px;color:#606060;left:182px;">X</div>
<div class="t" style="top:410.8px;color:#e4e4e4;left:194px;">0.0</div>
<div class="b" style="left:277px;top:410px;width:94px;height:16px;background:#2a2a2a;border-radius:3px;"></div>
<div class="t" style="top:410.8px;color:#606060;left:282px;">Y</div>
<div class="t" style="top:410.8px;color:#e4e4e4;left:294px;">0.0</div>
<svg class="b" style="left:13px;top:433.5px;" width="12" height="12" viewBox="0 0 12 12"><circle cx="6" cy="6" r="4" fill="none" stroke="#8a8a8a" stroke-width="1.1"/></svg>
<div class="t" style="top:432.5px;color:#e4e4e4;left:30px;letter-spacing:-0.072px;">Shape Visibility</div>
<div class="b" style="left:177px;top:432px;width:16px;height:16px;background:#2a2a2a;border-radius:3px;"></div>
<svg class="b" style="left:177px;top:432px;" width="16" height="16" viewBox="0 0 16 16"><path d="M3.2 8.6 L6.6 12 L13 3.6" fill="none" stroke="#2ecc71" stroke-width="2.2" stroke-linecap="round" stroke-linejoin="round"/></svg>
<svg class="b" style="left:13px;top:455.5px;" width="12" height="12" viewBox="0 0 12 12"><circle cx="6" cy="6" r="4" fill="none" stroke="#8a8a8a" stroke-width="1.1"/></svg>
<div class="t" style="top:454.5px;color:#e4e4e4;left:30px;letter-spacing:-0.232px;">Shape Opacity</div>
<div class="b" style="left:177px;top:460px;width:190px;height:4px;background:#e0e0e0;border-radius:2px;"></div>
<svg class="b" style="left:359px;top:455.5px;" width="13" height="13" viewBox="0 0 13 13"><circle cx="6.5" cy="6.5" r="5.4" fill="#74c8b0"/><circle cx="6.5" cy="6.5" r="1.8" fill="#4a9a88"/></svg>
<div class="b" style="left:377px;top:454px;width:94px;height:16px;background:#2a2a2a;border-radius:3px;"></div>
<div class="t" style="top:454.8px;color:#606060;font-size:11px;left:382px;letter-spacing:-0.5px;">%</div>
<div class="t" style="top:454.8px;color:#e4e4e4;left:394px;">100.0</div>
<svg class="b" style="left:13px;top:477.5px;" width="12" height="12" viewBox="0 0 12 12"><circle cx="6" cy="6" r="4" fill="none" stroke="#8a8a8a" stroke-width="1.1"/></svg>
<div class="t" style="top:476.5px;color:#e4e4e4;left:30px;letter-spacing:0.039px;">Auto Id</div>
<div class="b" style="left:177px;top:476px;width:16px;height:16px;background:#2a2a2a;border-radius:3px;"></div>
<svg class="b" style="left:177px;top:476px;" width="16" height="16" viewBox="0 0 16 16"><path d="M3.2 8.6 L6.6 12 L13 3.6" fill="none" stroke="#2ecc71" stroke-width="2.2" stroke-linecap="round" stroke-linejoin="round"/></svg>
<svg class="b" style="left:13px;top:499.5px;" width="12" height="12" viewBox="0 0 12 12"><circle cx="6" cy="6" r="4" fill="none" stroke="#8a8a8a" stroke-width="1.1"/></svg>
<div class="t" style="top:498.5px;color:#8c8c8c;left:30px;letter-spacing:-0.455px;">Shape Id</div>
<div class="b" style="left:177px;top:498px;width:94px;height:16px;background:#2a2a2a;border-radius:3px;"></div>
<div class="t" style="top:498.8px;color:#606060;left:182px;">#</div>
<div class="t" style="top:498.8px;color:#8c8c8c;left:194px;">0</div>
<svg class="b" style="left:13px;top:521.5px;" width="12" height="12" viewBox="0 0 12 12"><circle cx="6" cy="6" r="4" fill="none" stroke="#8a8a8a" stroke-width="1.1"/></svg>
<div class="t" style="top:520.5px;color:#e4e4e4;left:30px;letter-spacing:-0.168px;">Shape Time Offset</div>
<div class="b" style="left:177px;top:520px;width:94px;height:16px;background:#2a2a2a;border-radius:3px;"></div>
<div class="t" style="top:520.8px;color:#606060;left:182px;">#</div>
<div class="t" style="top:520.8px;color:#e4e4e4;left:194px;">0.0</div>
<div class="b" style="left:377px;top:388px;width:16px;height:16px;background:#2a2a2a;border-radius:4px;box-shadow:inset 0 0 0 0.9px #3c3c3c, 0 0 0 0.5px #242424;"></div>
<svg class="b" style="left:380px;top:390px;" width="10" height="12" viewBox="0 0 10 12"><path d="M2 4.6 V3.6 A3 3 0 0 1 8 3.6 V4.6 M2 7.4 V8.4 A3 3 0 0 0 8 8.4 V7.4" fill="none" stroke="#c8c8c8" stroke-width="1.3"/></svg>
<div class="b" style="left:6px;top:538px;width:468px;height:5px;background:#2b2b2b;"></div>
<div class="b" style="left:6px;top:543px;width:468px;height:23px;background:#353535;"></div>
<div class="b" style="left:6px;top:543px;width:468px;height:1.5px;background:#c4f070;"></div>
<div class="b" style="left:6px;top:543px;width:4px;height:23px;background:#c4f070;border-radius:2px 0 0 0;"></div>
<div class="b" style="left:470px;top:543px;width:4.2px;height:23px;background:#c4f070;border-radius:0 3px 0 0;"></div>
<svg class="b" style="left:10.5px;top:547px;" width="16" height="16" viewBox="0 0 16 16"><path d="M4 6.0 L8 10.0 L12 6.0" stroke="#b8b8b8" stroke-width="1.2" fill="none"/></svg>
<div class="b" style="left:28px;top:546px;width:18px;height:18px;background:#262626;border-radius:3px;"></div>
<svg class="b" style="left:30px;top:548px;" width="14" height="14" viewBox="0 0 14 14"><circle cx="6.6" cy="7.4" r="5.2" fill="none" stroke="#d8d8d8" stroke-width="1.2"/><path d="M4 7.2 L6.4 9.6 L12.6 2.2" fill="none" stroke="#d8d8d8" stroke-width="1.5"/></svg>
<svg class="b" style="left:49px;top:548.5px;" width="12" height="12" viewBox="0 0 12 12"><circle cx="6" cy="6" r="4" fill="none" stroke="#8a8a8a" stroke-width="1.1"/></svg>
<svg class="b" style="left:64px;top:549px;" width="18" height="12" viewBox="0 0 18 12"><path d="M0.5 6.5 C2 6.5 2.6 1.8 4.3 1.8 C6.4 1.8 6.6 10.6 8.8 10.6 C11 10.6 11.2 1.8 13.3 1.8 C15.2 1.8 15.6 8.2 17.5 9.2" fill="none" stroke="#6fcf7a" stroke-width="1.15"/></svg>
<div class="t" style="top:547.5px;color:#e4e4e4;left:87px;letter-spacing:-0.049px;">Oscillator [Position.X] Sine Driver</div>
<div class="b" style="left:366px;top:547px;width:16.5px;height:16.5px;background:#2a2a2a;border-radius:4px;box-shadow:0 0 0 1px #3c3c3c;"></div>
<div class="b" style="left:410.5px;top:547px;width:16.5px;height:16.5px;background:#2a2a2a;border-radius:4px;box-shadow:0 0 0 1px #3c3c3c;"></div>
<div class="b" style="left:430.5px;top:547px;width:16.5px;height:16.5px;background:#2a2a2a;border-radius:4px;box-shadow:0 0 0 1px #3c3c3c;"></div>
<div class="b" style="left:450.5px;top:547px;width:16.5px;height:16.5px;background:#2a2a2a;border-radius:4px;box-shadow:0 0 0 1px #3c3c3c;"></div>
<svg class="b" style="left:366px;top:547px;" width="17" height="17" viewBox="0 0 17 17"><rect x="2" y="3.6" width="5.2" height="2.2" fill="#f0f0f0"/><rect x="2" y="9.8" width="5.2" height="2.2" fill="#f0f0f0"/><rect x="7.2" y="3.6" width="1.4" height="8.4" fill="#4a4a4a"/><rect x="9" y="6.8" width="5.2" height="2" fill="#f0f0f0"/><path d="M16.4 13 V16.4 H13 Z" fill="#58b9a0"/></svg>
<div class="b" style="left:386.3px;top:547px;width:20.4px;height:16.5px;background:#2e2e2e;border-radius:4px;"></div>
<div class="b" style="left:396.4px;top:547px;width:0.8px;height:16.5px;background:#3a3a3a;"></div>
<svg class="b" style="left:387.5px;top:551px;" width="8" height="9" viewBox="0 0 8 9"><path d="M0.6 4.5 L3.6 1 H7.4 V8 H3.6 Z" fill="#d6b866"/></svg>
<svg class="b" style="left:398.5px;top:551px;" width="8" height="9" viewBox="0 0 8 9"><path d="M7.4 4.5 L4.4 1 H0.6 V8 H4.4 Z" fill="#c855e8"/></svg>
<svg class="b" style="left:410.5px;top:547px;" width="17" height="17" viewBox="0 0 17 17"><path d="M5.6 2.4 H10.8 V3.6 L10 4.2 V7.2 L12.2 9.4 V10.2 H8.7 V14.4 H7.7 V10.2 H4.2 V9.4 L6.4 7.2 V4.2 L5.6 3.6 Z" fill="#d8d8d8"/></svg>
<svg class="b" style="left:430.5px;top:547px;" width="17" height="17" viewBox="0 0 17 17"><path d="M10.4 6.4 C10.8 9.2 11.6 10 14.4 10.4 C11.6 10.8 10.8 11.6 10.4 14.4 C10 11.6 9.2 10.8 6.4 10.4 C9.2 10 10 9.2 10.4 6.4 Z" fill="#e8e8e8"/><circle cx="4.6" cy="4.4" r="1.1" fill="#c8c8c8"/><circle cx="10.6" cy="4.4" r="1" fill="#c8c8c8"/><circle cx="4.6" cy="10.6" r="1.1" fill="#c8c8c8"/><path d="M16.4 13 V16.4 H13 Z" fill="#58b9a0"/></svg>
<svg class="b" style="left:450.7px;top:547.2px;" width="16" height="16" viewBox="0 0 16 16"><path d="M4 4 L12 12 M12 4 L4 12" stroke="#e0e0e0" stroke-width="1" fill="none"/></svg>
<div class="b" style="left:6px;top:566px;width:468px;height:22px;background:#2b2b2b;"></div>
<div class="b" style="left:184px;top:568px;width:96px;height:20px;background:#464646;border-radius:5px 5px 0 0;"></div>
<div class="t" style="top:570px;color:#f0f0f0;left:232px;transform:translateX(-50%);letter-spacing:-0.071px;">Behaviour</div>
<div class="t" style="top:570px;color:#b4b4b4;left:328px;transform:translateX(-50%);letter-spacing:0.199px;">Deformer</div>
<div class="b" style="left:376px;top:573px;width:1px;height:11px;background:#b4b4b4;"></div>
<div class="t" style="top:570px;color:#b4b4b4;left:424px;transform:translateX(-50%);letter-spacing:0.042px;">Falloffs</div>
<div class="b" style="left:6px;top:588px;width:468px;height:84px;background:#3a3a3a;"></div>
<svg class="b" style="left:11px;top:592px;" width="458" height="76" viewBox="0 0 458 76"><rect width="458" height="76" fill="#1d1d1d"/><rect x="9" y="0" width="1.8" height="76" fill="#363636"/><rect x="19" y="0" width="1.8" height="76" fill="#363636"/><rect x="29" y="0" width="1.8" height="76" fill="#363636"/><rect x="39" y="0" width="1.8" height="76" fill="#363636"/><rect x="49" y="0" width="1.8" height="76" fill="#363636"/><rect x="59" y="0" width="1.8" height="76" fill="#363636"/><rect x="69" y="0" width="1.8" height="76" fill="#363636"/><rect x="79" y="0" width="1.8" height="76" fill="#363636"/><rect x="89" y="0" width="1.8" height="76" fill="#363636"/><rect x="99" y="0" width="1.8" height="76" fill="#363636"/><rect x="109" y="0" width="1.8" height="76" fill="#363636"/><rect x="119" y="0" width="1.8" height="76" fill="#363636"/><rect x="129" y="0" width="1.8" height="76" fill="#363636"/><rect x="139" y="0" width="1.8" height="76" fill="#363636"/><rect x="149" y="0" width="1.8" height="76" fill="#363636"/><rect x="159" y="0" width="1.8" height="76" fill="#363636"/><rect x="169" y="0" width="1.8" height="76" fill="#363636"/><rect x="179" y="0" width="1.8" height="76" fill="#363636"/><rect x="189" y="0" width="1.8" height="76" fill="#363636"/><rect x="199" y="0" width="1.8" height="76" fill="#363636"/><rect x="209" y="0" width="1.8" height="76" fill="#363636"/><rect x="219" y="0" width="1.8" height="76" fill="#363636"/><rect x="229" y="0" width="1.8" height="76" fill="#363636"/><rect x="239" y="0" width="1.8" height="76" fill="#363636"/><rect x="249" y="0" width="1.8" height="76" fill="#363636"/><rect x="259" y="0" width="1.8" height="76" fill="#363636"/><rect x="269" y="0" width="1.8" height="76" fill="#363636"/><rect x="279" y="0" width="1.8" height="76" fill="#363636"/><rect x="289" y="0" width="1.8" height="76" fill="#363636"/><rect x="299" y="0" width="1.8" height="76" fill="#363636"/><rect x="309" y="0" width="1.8" height="76" fill="#363636"/><rect x="319" y="0" width="1.8" height="76" fill="#363636"/><rect x="329" y="0" width="1.8" height="76" fill="#363636"/><rect x="339" y="0" width="1.8" height="76" fill="#363636"/><rect x="349" y="0" width="1.8" height="76" fill="#363636"/><rect x="359" y="0" width="1.8" height="76" fill="#363636"/><rect x="369" y="0" width="1.8" height="76" fill="#363636"/><rect x="379" y="0" width="1.8" height="76" fill="#363636"/><rect x="389" y="0" width="1.8" height="76" fill="#363636"/><rect x="399" y="0" width="1.8" height="76" fill="#363636"/><rect x="409" y="0" width="1.8" height="76" fill="#363636"/><rect x="419" y="0" width="1.8" height="76" fill="#363636"/><rect x="429" y="0" width="1.8" height="76" fill="#363636"/><rect x="439" y="0" width="1.8" height="76" fill="#363636"/><rect x="449" y="0" width="1.8" height="76" fill="#363636"/><rect x="459" y="0" width="1.8" height="76" fill="#363636"/><path d="M0 38 H458" stroke="#4a70c8" stroke-width="1.4"/><polyline points="0.0,38.00 2.0,35.36 4.0,32.75 6.0,30.17 8.0,27.64 10.0,25.19 12.0,22.82 14.0,20.57 16.0,18.43 18.0,16.44 20.0,14.59 22.0,12.91 24.0,11.40 26.0,10.08 28.0,8.96 30.0,8.04 32.0,7.33 34.0,6.84 36.0,6.56 38.0,6.51 40.0,6.67 42.0,7.06 44.0,7.66 46.0,8.48 48.0,9.50 50.0,10.72 52.0,12.13 54.0,13.73 56.0,15.49 58.0,17.42 60.0,19.48 62.0,21.68 64.0,23.99 66.0,26.40 68.0,28.90 70.0,31.45 72.0,34.05 74.0,36.68 76.0,39.32 78.0,41.95 80.0,44.55 82.0,47.10 84.0,49.60 86.0,52.01 88.0,54.32 90.0,56.52 92.0,58.58 94.0,60.51 96.0,62.27 98.0,63.87 100.0,65.28 102.0,66.50 104.0,67.52 106.0,68.34 108.0,68.94 110.0,69.33 112.0,69.49 114.0,69.44 116.0,69.16 118.0,68.67 120.0,67.96 122.0,67.04 124.0,65.92 126.0,64.60 128.0,63.09 130.0,61.41 132.0,59.56 134.0,57.57 136.0,55.43 138.0,53.18 140.0,50.81 142.0,48.36 144.0,45.83 146.0,43.25 148.0,40.64 150.0,38.00 152.0,35.36 154.0,32.75 156.0,30.17 158.0,27.64 160.0,25.19 162.0,22.82 164.0,20.57 166.0,18.43 168.0,16.44 170.0,14.59 172.0,12.91 174.0,11.40 176.0,10.08 178.0,8.96 180.0,8.04 182.0,7.33 184.0,6.84 186.0,6.56 188.0,6.51 190.0,6.67 192.0,7.06 194.0,7.66 196.0,8.48 198.0,9.50 200.0,10.72 202.0,12.13 204.0,13.73 206.0,15.49 208.0,17.42 210.0,19.48 212.0,21.68 214.0,23.99 216.0,26.40 218.0,28.90 220.0,31.45 222.0,34.05 224.0,36.68 226.0,39.32 228.0,41.95 230.0,44.55 232.0,47.10 234.0,49.60 236.0,52.01 238.0,54.32 240.0,56.52 242.0,58.58 244.0,60.51 246.0,62.27 248.0,63.87 250.0,65.28 252.0,66.50 254.0,67.52 256.0,68.34 258.0,68.94 260.0,69.33 262.0,69.49 264.0,69.44 266.0,69.16 268.0,68.67 270.0,67.96 272.0,67.04 274.0,65.92 276.0,64.60 278.0,63.09 280.0,61.41 282.0,59.56 284.0,57.57 286.0,55.43 288.0,53.18 290.0,50.81 292.0,48.36 294.0,45.83 296.0,43.25 298.0,40.64 300.0,38.00 302.0,35.36 304.0,32.75 306.0,30.17 308.0,27.64 310.0,25.19 312.0,22.82 314.0,20.57 316.0,18.43 318.0,16.44 320.0,14.59 322.0,12.91 324.0,11.40 326.0,10.08 328.0,8.96 330.0,8.04 332.0,7.33 334.0,6.84 336.0,6.56 338.0,6.51 340.0,6.67 342.0,7.06 344.0,7.66 346.0,8.48 348.0,9.50 350.0,10.72 352.0,12.13 354.0,13.73 356.0,15.49 358.0,17.42 360.0,19.48 362.0,21.68 364.0,23.99 366.0,26.40 368.0,28.90 370.0,31.45 372.0,34.05 374.0,36.68 376.0,39.32 378.0,41.95 380.0,44.55 382.0,47.10 384.0,49.60 386.0,52.01 388.0,54.32 390.0,56.52 392.0,58.58 394.0,60.51 396.0,62.27 398.0,63.87 400.0,65.28 402.0,66.50 404.0,67.52 406.0,68.34 408.0,68.94 410.0,69.33 412.0,69.49 414.0,69.44 416.0,69.16 418.0,68.67 420.0,67.96 422.0,67.04 424.0,65.92 426.0,64.60 428.0,63.09 430.0,61.41 432.0,59.56 434.0,57.57 436.0,55.43 438.0,53.18 440.0,50.81 442.0,48.36 444.0,45.83 446.0,43.25 448.0,40.64 450.0,38.00 452.0,35.36 454.0,32.75 456.0,30.17 458.0,27.64" fill="none" stroke="#e8e8e8" stroke-width="1.1"/></svg>
<div class="b" style="left:6px;top:672px;width:468px;height:340px;background:#3a3a3a;border-radius:0 0 4px 4px;"></div>
<svg class="b" style="left:13px;top:676.5px;" width="12" height="12" viewBox="0 0 12 12"><circle cx="6" cy="6" r="4" fill="none" stroke="#8a8a8a" stroke-width="1.1"/></svg>
<div class="t" style="top:675.5px;color:#e4e4e4;left:30px;letter-spacing:0.042px;">Strength</div>
<div class="b" style="left:177px;top:675px;width:94px;height:16px;background:#2a2a2a;border-radius:3px;"></div>
<div class="t" style="top:675.8px;color:#606060;font-size:11px;left:182px;letter-spacing:-0.5px;">%</div>
<div class="t" style="top:675.8px;color:#e4e4e4;left:194px;">100.0</div>
<svg class="b" style="left:13px;top:698.5px;" width="12" height="12" viewBox="0 0 12 12"><circle cx="6" cy="6" r="4" fill="none" stroke="#8a8a8a" stroke-width="1.1"/></svg>
<div class="t" style="top:697.5px;color:#e4e4e4;left:30px;letter-spacing:-0.154px;">Strength Fades to Zero</div>
<div class="b" style="left:177px;top:697px;width:16px;height:16px;background:#2a2a2a;border-radius:3px;"></div>
<svg class="b" style="left:177px;top:697px;" width="16" height="16" viewBox="0 0 16 16"><path d="M3.2 8.6 L6.6 12 L13 3.6" fill="none" stroke="#2ecc71" stroke-width="2.2" stroke-linecap="round" stroke-linejoin="round"/></svg>
<svg class="b" style="left:13px;top:720.5px;" width="12" height="12" viewBox="0 0 12 12"><circle cx="6" cy="6" r="4" fill="none" stroke="#8a8a8a" stroke-width="1.1"/></svg>
<div class="t" style="top:719.5px;color:#e4e4e4;left:30px;letter-spacing:-0.329px;">Type</div>
<svg class="b" style="left:13px;top:742.5px;" width="12" height="12" viewBox="0 0 12 12"><circle cx="6" cy="6" r="4" fill="none" stroke="#8a8a8a" stroke-width="1.1"/></svg>
<div class="t" style="top:741.5px;color:#e4e4e4;left:30px;letter-spacing:-0.194px;">Wave Style</div>
<div class="t" style="top:763.5px;color:#9a9a9a;left:30px;letter-spacing:-0.170px;">Graph</div>
<div class="b" style="left:6px;top:784px;width:468px;height:1px;background:#262626;"></div>
<svg class="b" style="left:13px;top:791.5px;" width="12" height="12" viewBox="0 0 12 12"><circle cx="6" cy="6" r="4" fill="none" stroke="#8a8a8a" stroke-width="1.1"/></svg>
<div class="t" style="top:790.5px;color:#e4e4e4;left:30px;letter-spacing:0.190px;">Minimum</div>
<svg class="b" style="left:13px;top:813.5px;" width="12" height="12" viewBox="0 0 12 12"><circle cx="6" cy="6" r="4" fill="none" stroke="#8a8a8a" stroke-width="1.1"/></svg>
<div class="t" style="top:812.5px;color:#e4e4e4;left:30px;letter-spacing:0.071px;">Maximum</div>
<div class="b" style="left:9px;top:832px;width:462px;height:21px;background:#4f4f4f;border-radius:4px;"></div>
<svg class="b" style="left:13px;top:835.5px;" width="12" height="12" viewBox="0 0 12 12"><circle cx="6" cy="6" r="4" fill="none" stroke="#8a8a8a" stroke-width="1.1"/></svg>
<div class="t" style="top:834.5px;color:#e4e4e4;left:30px;letter-spacing:0.006px;">Value Offset</div>
<div class="b" style="left:153px;top:834px;width:16px;height:17px;background:#262626;border-radius:3px;"></div>
<div class="t" style="top:834.5px;color:#f0f0f0;left:161px;transform:translateX(-50%);">π</div>
<div class="b" style="left:177px;top:834px;width:94px;height:16px;background:#2a2a2a;border-radius:3px;"></div>
<div class="b" style="left:261px;top:834px;width:10px;height:16px;background:#3a3a3a;border-radius:0 3px 3px 0;"></div>
<div class="t" style="top:834.8px;color:#606060;left:182px;">#</div>
<div class="t" style="top:834.8px;color:#dcc06c;left:194px;">20.209</div>
<svg class="b" style="left:250px;top:838px;" width="8" height="8" viewBox="0 0 8 8"><path d="M0.5 4 L3.5 0.8 H7 V7.2 H3.5 Z" fill="#d6b866"/></svg>
<svg class="b" style="left:262px;top:838px;" width="8" height="8" viewBox="0 0 8 8"><path d="M7.5 4 L4.5 0.8 H1 V7.2 H4.5 Z" fill="#a8a8a8"/></svg>
<svg class="b" style="left:13px;top:857.5px;" width="12" height="12" viewBox="0 0 12 12"><circle cx="6" cy="6" r="4" fill="none" stroke="#8a8a8a" stroke-width="1.1"/></svg>
<div class="t" style="top:856.5px;color:#e4e4e4;left:30px;letter-spacing:-0.290px;">Stagger</div>
<div class="b" style="left:177px;top:856px;width:94px;height:16px;background:#2a2a2a;border-radius:3px;"></div>
<div class="t" style="top:856.8px;color:#606060;left:182px;">#</div>
<div class="t" style="top:856.8px;color:#e4e4e4;left:194px;">0.0</div>
<svg class="b" style="left:13px;top:879.5px;" width="12" height="12" viewBox="0 0 12 12"><circle cx="6" cy="6" r="4" fill="none" stroke="#8a8a8a" stroke-width="1.1"/></svg>
<div class="t" style="top:878.5px;color:#e4e4e4;left:30px;letter-spacing:-0.279px;">Separate Channels</div>
<div class="b" style="left:177px;top:878px;width:16px;height:16px;background:#2a2a2a;border-radius:3px;"></div>
<div class="b" style="left:6px;top:899px;width:468px;height:1px;background:#262626;"></div>
<svg class="b" style="left:13px;top:906.5px;" width="12" height="12" viewBox="0 0 12 12"><circle cx="6" cy="6" r="4" fill="none" stroke="#8a8a8a" stroke-width="1.1"/></svg>
<div class="t" style="top:905.5px;color:#e4e4e4;left:30px;letter-spacing:-0.030px;">Time Mode</div>
<div class="b" style="left:177px;top:905px;width:193px;height:16px;background:#4e4e4e;border-radius:3px;border:1px solid #5a5a5a;"></div>
<div class="t" style="top:905.5px;color:#e4e4e4;left:180px;letter-spacing:-0.058px;">Minutes (BPM)</div>
<svg class="b" style="left:353px;top:905px;" width="16" height="16" viewBox="0 0 16 16"><path d="M4.4 6.2 L8 9.8 L11.6 6.2" stroke="#c8c8c8" stroke-width="1.1" fill="none"/></svg>
<svg class="b" style="left:13px;top:928.5px;" width="12" height="12" viewBox="0 0 12 12"><circle cx="6" cy="6" r="4" fill="none" stroke="#8a8a8a" stroke-width="1.1"/></svg>
<div class="t" style="top:927.5px;color:#e4e4e4;left:30px;letter-spacing:-0.144px;">Frequency</div>
<div class="b" style="left:177px;top:927px;width:94px;height:16px;background:#2a2a2a;border-radius:3px;"></div>
<div class="t" style="top:927.8px;color:#606060;left:182px;">#</div>
<div class="t" style="top:927.8px;color:#e4e4e4;left:194px;">10.0</div>
<svg class="b" style="left:13px;top:950.5px;" width="12" height="12" viewBox="0 0 12 12"><circle cx="6" cy="6" r="4" fill="none" stroke="#8a8a8a" stroke-width="1.1"/></svg>
<div class="t" style="top:949.5px;color:#e4e4e4;left:30px;letter-spacing:0.020px;">Time</div>
<div class="b" style="left:177px;top:949px;width:94px;height:16px;background:#2a2a2a;border-radius:3px;"></div>
<div class="b" style="left:261px;top:949px;width:10px;height:16px;background:#3a3a3a;border-radius:0 3px 3px 0;"></div>
<div class="t" style="top:949.8px;color:#606060;left:182px;">#</div>
<div class="t" style="top:949.8px;color:#dcc06c;left:194px;">223.0</div>
<svg class="b" style="left:250px;top:953px;" width="8" height="8" viewBox="0 0 8 8"><path d="M0.5 4 L3.5 0.8 H7 V7.2 H3.5 Z" fill="#d6b866"/></svg>
<svg class="b" style="left:262px;top:953px;" width="8" height="8" viewBox="0 0 8 8"><path d="M7.5 4 L4.5 0.8 H1 V7.2 H4.5 Z" fill="#a8a8a8"/></svg>
<div class="b" style="left:273.6px;top:949.6px;width:15px;height:15px;background:#262626;border-radius:3px;box-shadow:inset 0 0 0 0.9px #3c3c3c, 0 0 0 0.5px #242424;"></div>
<svg class="b" style="left:273px;top:949px;" width="16" height="16" viewBox="0 0 16 16"><path d="M4.8 4.8 L11.2 11.2 M11.2 4.8 L4.8 11.2" stroke="#d0d0d0" stroke-width="1.1" fill="none"/></svg>
<svg class="b" style="left:13px;top:972.5px;" width="12" height="12" viewBox="0 0 12 12"><circle cx="6" cy="6" r="4" fill="none" stroke="#8a8a8a" stroke-width="1.1"/></svg>
<div class="t" style="top:971.5px;color:#e4e4e4;left:30px;letter-spacing:0.059px;">Time Offset</div>
<div class="b" style="left:177px;top:971px;width:94px;height:16px;background:#2a2a2a;border-radius:3px;"></div>
<div class="t" style="top:971.8px;color:#606060;left:182px;">S</div>
<div class="t" style="top:971.8px;color:#e4e4e4;left:194px;">0.0</div>
<svg class="b" style="left:13px;top:994.5px;" width="12" height="12" viewBox="0 0 12 12"><circle cx="6" cy="6" r="4" fill="none" stroke="#8a8a8a" stroke-width="1.1"/></svg>
<div class="t" style="top:993.5px;color:#e4e4e4;left:30px;letter-spacing:-0.357px;">Time Scale</div>
<div class="b" style="left:177px;top:993px;width:94px;height:16px;background:#2a2a2a;border-radius:3px;"></div>
<div class="t" style="top:993.8px;color:#606060;left:182px;">#</div>
<div class="t" style="top:993.8px;color:#e4e4e4;left:194px;">1.0</div>
<div class="b" style="left:144px;top:709px;width:299px;height:123px;background:#2e2e2e;border:3px solid #b8e61e;"></div>
<div class="b" style="left:152px;top:719px;width:282px;height:109px;background:#1b1b1b;border-radius:2px;"></div>
<div class="b" style="left:153px;top:720px;width:280px;height:18px;background:#262626;"></div>
<div class="t" style="top:721.5px;color:#f0f0f0;left:293px;transform:translateX(-50%);letter-spacing:0.006px;">Value Offset</div>
<svg class="b" style="left:416px;top:721px;" width="16" height="16" viewBox="0 0 16 16"><path d="M4.2 4.2 L11.8 11.8 M11.8 4.2 L4.2 11.8" stroke="#d8d8d8" stroke-width="1.1" fill="none"/></svg>
<div class="b" style="left:153px;top:738px;width:280px;height:21px;background:#393939;"></div>
<div class="t" style="top:740.5px;color:#f0f0f0;left:156px;letter-spacing:-0.288px;">Use Expression</div>
<div class="b" style="left:414px;top:740px;width:16px;height:16px;background:#2a2a2a;border-radius:3px;"></div>
<svg class="b" style="left:414px;top:740px;" width="16" height="16" viewBox="0 0 16 16"><path d="M3.2 8.6 L6.6 12 L13 3.6" fill="none" stroke="#2ecc71" stroke-width="2.2" stroke-linecap="round" stroke-linejoin="round"/></svg>
<div class="b" style="left:156px;top:759px;width:274px;height:66px;background:#272727;border-radius:2px;"></div>
<div class="b" style="left:158px;top:761px;width:18px;height:18px;background:#6dc5b0;border-radius:3px;"></div>
<div class="t" style="top:762px;color:#1e3a34;font-size:11px;font-family:'Liberation Mono',sans-serif;left:167px;transform:translateX(-50%);">#</div>
<div class="t" style="left:183px;top:765.5px;font-family:'Liberation Mono',monospace;font-size:13px;line-height:18px;height:18px;"><span style="color:#6c9ad8">20</span><span style="color:#dcdcdc">+pi/</span><span style="color:#7c84cc">value</span></div>
<svg class="b" style="left:411px;top:762px;" width="16" height="16" viewBox="0 0 16 16"><path d="M4.2 4.2 L11.8 11.8 M11.8 4.2 L4.2 11.8" stroke="#d8d8d8" stroke-width="1.1" fill="none"/></svg>
<!-- center -->
<div class="b" style="left:530px;top:85px;width:1058px;height:22px;background:#1c1c1c;"></div>
<div class="b" style="left:530px;top:85px;width:87px;height:22px;background:#464646;border-radius:4px 4px 0 0;"></div>
<div class="t" style="top:88.5px;color:#f0f0f0;left:535px;letter-spacing:-0.054px;">Composition 3</div>
<div class="b" style="left:530px;top:107px;width:1058px;height:451px;background:#000;"></div>
<div class="b" style="left:694px;top:127px;width:728px;height:410px;background:#00aeff;"></div>
<div class="b" style="left:1039px;top:280px;width:105px;height:104px;background:#52a0ff;border-radius:50%;box-shadow:0 0 0 0.5px rgba(200,120,200,.5);"></div>
<div class="b" style="left:1038.5px;top:279.5px;width:106px;height:105px;border:1px solid #3ecf8e;"></div>
<div class="b" style="left:1036px;top:277px;width:6px;height:6px;background:#ffffff;border-radius:1px;box-shadow:0 0 0 0.6px #3ecf8e;"></div>
<div class="b" style="left:1141.5px;top:277px;width:6px;height:6px;background:#ffffff;border-radius:1px;box-shadow:0 0 0 0.6px #3ecf8e;"></div>
<div class="b" style="left:1036px;top:382px;width:6px;height:6px;background:#ffffff;border-radius:1px;box-shadow:0 0 0 0.6px #3ecf8e;"></div>
<div class="b" style="left:1141.5px;top:382px;width:6px;height:6px;background:#ffffff;border-radius:1px;box-shadow:0 0 0 0.6px #3ecf8e;"></div>
<div class="b" style="left:1039px;top:263px;width:9px;height:9px;background:#ffe27a;"></div>
<div class="t" style="top:260.5px;color:#101820;font-size:11.5px;left:1051px;text-shadow:0 0 0.6px #101820;letter-spacing:0.373px;">Duplicator</div>
<svg class="b" style="left:1052.5px;top:326.5px;" width="11" height="11" viewBox="0 0 11 11"><circle cx="5.5" cy="5.5" r="4.2" fill="none" stroke="#4a4a66" stroke-width="0.9"/><circle cx="5.5" cy="5.5" r="1.1" fill="#4a4a66"/></svg>
<div class="t" style="top:325px;color:#ffffff;font-size:30px;left:1095px;transform:translateX(-50%);line-height:34px;height:34px;top:316px;letter-spacing:-0.5px;-webkit-text-stroke:0.5px #fff;">14</div>
<div class="b" style="left:530px;top:440px;width:163.6px;height:110px;overflow:hidden;"><div class="t" style="left:39.8px;top:19.6px;color:#f4f4f4;"><b style="font-size:11px;letter-spacing:-0.25px;">Hold S</b><span style="color:#4c4c4c;letter-spacing:-0.1px;margin-left:2.4px;">Direct Layer Selection</span></div><div class="t" style="left:39.8px;top:33.62px;color:#f4f4f4;"><b style="font-size:11px;letter-spacing:-0.25px;">Space</b><span style="color:#4c4c4c;letter-spacing:-0.1px;margin-left:2.4px;">Play/ Stop</span></div><div class="t" style="left:39.8px;top:47.64px;color:#f4f4f4;"><b style="font-size:11px;letter-spacing:-0.25px;">Space + click + drag</b><span style="color:#4c4c4c;letter-spacing:-0.1px;margin-left:2.4px;">Pan</span></div><div class="t" style="left:39.8px;top:61.66px;color:#f4f4f4;"><b style="font-size:11px;letter-spacing:-0.25px;">Alt + click + drag</b><span style="color:#4c4c4c;letter-spacing:-0.1px;margin-left:2.4px;">Move Pivot Point</span></div><div class="t" style="left:39.8px;top:75.68px;color:#f4f4f4;"><b style="font-size:11px;letter-spacing:-0.25px;">Shift</b><span style="color:#4c4c4c;letter-spacing:-0.1px;margin-left:2.4px;">Enable Snapping</span></div></div>
<div class="b" style="left:693.6px;top:440px;width:200px;height:110px;overflow:hidden;"><div class="t" style="left:-123.8px;top:19.6px;color:#f4f4f4;"><b style="font-size:11px;letter-spacing:-0.25px;">Hold S</b><span style="color:#5874c6;letter-spacing:-0.1px;margin-left:2.4px;">Direct Layer Selection</span></div><div class="t" style="left:-123.8px;top:33.62px;color:#f4f4f4;"><b style="font-size:11px;letter-spacing:-0.25px;">Space</b><span style="color:#5874c6;letter-spacing:-0.1px;margin-left:2.4px;">Play/ Stop</span></div><div class="t" style="left:-123.8px;top:47.64px;color:#f4f4f4;"><b style="font-size:11px;letter-spacing:-0.25px;">Space + click + drag</b><span style="color:#5874c6;letter-spacing:-0.1px;margin-left:2.4px;">Pan</span></div><div class="t" style="left:-123.8px;top:61.66px;color:#f4f4f4;"><b style="font-size:11px;letter-spacing:-0.25px;">Alt + click + drag</b><span style="color:#5874c6;letter-spacing:-0.1px;margin-left:2.4px;">Move Pivot Point</span></div><div class="t" style="left:-123.8px;top:75.68px;color:#f4f4f4;"><b style="font-size:11px;letter-spacing:-0.25px;">Shift</b><span style="color:#5874c6;letter-spacing:-0.1px;margin-left:2.4px;">Enable Snapping</span></div></div>
<div class="t" style="top:536px;color:#f2f2f2;left:1058px;transform:translateX(-50%);letter-spacing:0.100px;">Viewport Quality: High</div>
<div class="b" style="left:530px;top:558px;width:1058px;height:22px;background:#464646;"></div>
<div class="b" style="left:535px;top:561.3px;width:78px;height:15.6px;background:#2b2b2b;border-radius:3px;"></div>
<div class="t" style="top:561.5px;color:#e4e4e4;left:539px;letter-spacing:-0.473px;">38%</div>
<svg class="b" style="left:596px;top:561px;" width="16" height="16" viewBox="0 0 16 16"><path d="M4.6 6.3 L8 9.7 L11.4 6.3" stroke="#d0d0d0" stroke-width="1.1" fill="none"/></svg>
<div class="b" style="left:866.7px;top:560px;width:98.5px;height:18px;background:#2b2b2b;border-radius:4px;box-shadow:0 0 0 0.8px #222;"></div>
<div class="b" style="left:885.25px;top:560px;width:1.5px;height:18px;background:#222;"></div>
<div class="b" style="left:905.3000000000001px;top:560px;width:1.5px;height:18px;background:#222;"></div>
<div class="b" style="left:925.35px;top:560px;width:1.5px;height:18px;background:#222;"></div>
<div class="b" style="left:945.4000000000001px;top:560px;width:1.5px;height:18px;background:#222;"></div>
<svg class="b" style="left:867.7px;top:562px;" width="16" height="14" viewBox="0 0 16 14"><rect x="2.5" y="2" width="1.8" height="10" fill="#d6d6d6"/><path d="M13 2 V12 L5.4 7 Z" fill="#d6d6d6"/></svg>
<svg class="b" style="left:887.7px;top:562px;" width="16" height="14" viewBox="0 0 16 14"><path d="M9.6 2 V12 L2.4 7 Z" fill="#d6d6d6"/><rect x="11" y="2" width="1.8" height="10" fill="#d6d6d6"/></svg>
<svg class="b" style="left:907.5px;top:562px;" width="16" height="14" viewBox="0 0 16 14"><path d="M4 1.6 V12.4 L13 7 Z" fill="#d6d6d6"/></svg>
<svg class="b" style="left:927.5px;top:562px;" width="16" height="14" viewBox="0 0 16 14"><rect x="3.2" y="2" width="1.8" height="10" fill="#d6d6d6"/><path d="M6.4 2 V12 L13.6 7 Z" fill="#d6d6d6"/></svg>
<svg class="b" style="left:947.5px;top:562px;" width="16" height="14" viewBox="0 0 16 14"><path d="M3 2 V12 L10.6 7 Z" fill="#d6d6d6"/><rect x="11.7" y="2" width="1.8" height="10" fill="#d6d6d6"/></svg>
<div class="b" style="left:971.5px;top:560px;width:19px;height:18px;background:#2b2b2b;border-radius:4px;box-shadow:0 0 0 0.8px #222;"></div>
<svg class="b" style="left:973.5px;top:562px;" width="15" height="14" viewBox="0 0 15 14"><path d="M7.6 3.6 H2.6 A1.2 1.2 0 0 0 1.4 4.8 V10 A1.2 1.2 0 0 0 2.6 11.2 H12.4 A1.2 1.2 0 0 0 13.6 10 V6.4" fill="none" stroke="#d6d6d6" stroke-width="1.1"/><path d="M8.8 0.6 L13.6 3.4 L8.8 6.2 Z" fill="#d6d6d6"/></svg>
<div class="b" style="left:1232.3px;top:560px;width:36.7px;height:18px;background:#2b2b2b;border-radius:3px;"></div>
<svg class="b" style="left:1233px;top:563px;" width="16" height="12" viewBox="0 0 16 12"><path d="M1.2 6 L4.8 2.2 H15 V9.8 H4.8 Z" fill="#e4e4e4"/><circle cx="5.6" cy="6" r="1.7" fill="#2e2e2e"/></svg>
<div class="t" style="top:561.5px;color:#9a9a9a;left:1262px;transform:translateX(-50%);">0</div>
<div class="b" style="left:1272.8px;top:560px;width:30.8px;height:18px;background:#2b2b2b;border-radius:4px;box-shadow:0 0 0 0.8px #222;"></div>
<div class="b" style="left:1291.8px;top:560px;width:0.8px;height:18px;background:#252525;"></div>
<svg class="b" style="left:1295.3px;top:565px;" width="7" height="8" viewBox="0 0 7 8"><path d="M1 0.8 L6 4 L1 7.2 Z" fill="none" stroke="#9a9a9a" stroke-width="1"/></svg>
<svg class="b" style="left:1274.6px;top:562px;" width="16" height="14" viewBox="0 0 16 14"><path d="M1 5 H4 L8 1.4 V12.6 L4 9 H1 Z" fill="#2ecc71"/><path d="M9.8 4.4 Q11.4 7 9.8 9.6 M11.6 2.6 Q14.4 7 11.6 11.4" fill="none" stroke="#2ecc71" stroke-width="1.2"/></svg>
<div class="b" style="left:1307.5px;top:560px;width:30.8px;height:18px;background:#2b2b2b;border-radius:4px;box-shadow:0 0 0 0.8px #222;"></div>
<div class="b" style="left:1307.5px;top:560px;width:19px;height:18px;background:#3c3c3c;border-radius:4px 0 0 4px;"></div>
<div class="b" style="left:1326.5px;top:560px;width:0.8px;height:18px;background:#252525;"></div>
<svg class="b" style="left:1330.0px;top:565px;" width="7" height="8" viewBox="0 0 7 8"><path d="M1 0.8 L6 4 L1 7.2 Z" fill="none" stroke="#9a9a9a" stroke-width="1"/></svg>
<svg class="b" style="left:1309.4px;top:562px;" width="16" height="14" viewBox="0 0 16 14"><path d="M4.4 12.4 L2.4 8.4 A4.6 4.6 0 0 1 10.4 3.8 L13.4 7.4 L11.6 8.8 L8.8 5.4 A2.3 2.3 0 0 0 4.8 7.4 L6.6 11.2 Z" fill="#e8e8e8"/></svg>
<div class="b" style="left:1342.5px;top:560px;width:30.8px;height:18px;background:#2b2b2b;border-radius:4px;box-shadow:0 0 0 0.8px #222;"></div>
<div class="b" style="left:1342.5px;top:560px;width:19px;height:18px;background:#3c3c3c;border-radius:4px 0 0 4px;"></div>
<div class="b" style="left:1361.5px;top:560px;width:0.8px;height:18px;background:#252525;"></div>
<svg class="b" style="left:1365.0px;top:565px;" width="7" height="8" viewBox="0 0 7 8"><path d="M1 0.8 L6 4 L1 7.2 Z" fill="none" stroke="#9a9a9a" stroke-width="1"/></svg>
<svg class="b" style="left:1344.2px;top:562px;" width="16" height="14" viewBox="0 0 16 14"><path d="M5 0.5 V13.5 M11 0.5 V13.5 M1 4 H15 M1 10 H15" stroke="#e8e8e8" stroke-width="1.1"/></svg>
<div class="b" style="left:1377.2px;top:560px;width:19.3px;height:18px;background:#2b2b2b;border-radius:4px;box-shadow:0 0 0 0.8px #222;"></div>
<svg class="b" style="left:1379px;top:562px;" width="16" height="14" viewBox="0 0 16 14"><rect x="0.6" y="2" width="3.6" height="10.4" fill="#2ecc71"/><rect x="5.4" y="2" width="10" height="4.6" fill="none" stroke="#2ecc71" stroke-width="1.3"/><rect x="5" y="8.2" width="10.8" height="4.2" fill="#2ecc71"/></svg>
<div class="b" style="left:1400.3px;top:560px;width:19.3px;height:18px;background:#2b2b2b;border-radius:4px;box-shadow:0 0 0 0.8px #222;"></div>
<div class="b" style="left:1400.3px;top:560px;width:19px;height:18px;background:#3c3c3c;border-radius:4px;"></div>
<svg class="b" style="left:1402px;top:562px;" width="16" height="14" viewBox="0 0 16 14"><path d="M1 2.4 L5 7 L1 11.6 M5.6 2.4 L9.6 7 L5.6 11.6 M10.2 2.4 L14.2 7 L10.2 11.6" fill="none" stroke="#c4c4c4" stroke-width="1.7"/></svg>
<div class="b" style="left:1423.5px;top:560px;width:30.8px;height:18px;background:#2b2b2b;border-radius:4px;box-shadow:0 0 0 0.8px #222;"></div>
<div class="b" style="left:1423.5px;top:560px;width:19px;height:18px;background:#3c3c3c;border-radius:4px 0 0 4px;"></div>
<div class="b" style="left:1442.5px;top:560px;width:0.8px;height:18px;background:#252525;"></div>
<svg class="b" style="left:1446.0px;top:565px;" width="7" height="8" viewBox="0 0 7 8"><path d="M1 0.8 L6 4 L1 7.2 Z" fill="none" stroke="#9a9a9a" stroke-width="1"/></svg>
<svg class="b" style="left:1425.3px;top:562px;" width="16" height="14" viewBox="0 0 16 14"><rect x="0.8" y="1.6" width="14" height="9" fill="none" stroke="#e8e8e8" stroke-width="1.3"/><rect x="0" y="11" width="15.6" height="2" fill="#e8e8e8"/></svg>
<div class="b" style="left:1458px;top:560px;width:30.8px;height:18px;background:#2b2b2b;border-radius:4px;box-shadow:0 0 0 0.8px #222;"></div>
<div class="b" style="left:1458px;top:560px;width:19px;height:18px;background:#3c3c3c;border-radius:4px 0 0 4px;"></div>
<div class="b" style="left:1477px;top:560px;width:0.8px;height:18px;background:#252525;"></div>
<svg class="b" style="left:1480.5px;top:565px;" width="7" height="8" viewBox="0 0 7 8"><path d="M1 0.8 L6 4 L1 7.2 Z" fill="none" stroke="#9a9a9a" stroke-width="1"/></svg>
<svg class="b" style="left:1460px;top:562px;" width="16" height="14" viewBox="0 0 16 14"><rect x="0.8" y="1" width="8.6" height="5.6" fill="none" stroke="#b8b8b8" stroke-width="1.1"/><path d="M11.6 4 V9 H3.6 M14 6.8 V11.6 H6.2 M16 9.4 V13.6 H9" fill="none" stroke="#a0a0a0" stroke-width="1"/></svg>
<div class="b" style="left:1493.2px;top:560px;width:30.8px;height:18px;background:#2b2b2b;border-radius:4px;box-shadow:0 0 0 0.8px #222;"></div>
<div class="b" style="left:1493.2px;top:560px;width:19px;height:18px;background:#3c3c3c;border-radius:4px 0 0 4px;"></div>
<div class="b" style="left:1512.2px;top:560px;width:0.8px;height:18px;background:#252525;"></div>
<svg class="b" style="left:1515.7px;top:565px;" width="7" height="8" viewBox="0 0 7 8"><path d="M1 0.8 L6 4 L1 7.2 Z" fill="none" stroke="#9a9a9a" stroke-width="1"/></svg>
<svg class="b" style="left:1495px;top:562px;" width="16" height="14" viewBox="0 0 16 14"><rect x="1" y="0.8" width="8.4" height="8.4" fill="#b8b8b8"/><rect x="6" y="5.4" width="8" height="8" fill="#3c3c3c" stroke="#e8e8e8" stroke-width="1.3"/></svg>
<div class="b" style="left:1528.5px;top:560px;width:30.8px;height:18px;background:#2b2b2b;border-radius:4px;box-shadow:0 0 0 0.8px #222;"></div>
<div class="b" style="left:1547.5px;top:560px;width:0.8px;height:18px;background:#252525;"></div>
<svg class="b" style="left:1551.0px;top:565px;" width="7" height="8" viewBox="0 0 7 8"><path d="M1 0.8 L6 4 L1 7.2 Z" fill="none" stroke="#9a9a9a" stroke-width="1"/></svg>
<svg class="b" style="left:1530.5px;top:562px;" width="16" height="14" viewBox="0 0 16 14"><rect x="1.0" y="0.5" width="3.5" height="3.3" fill="#2ecc71"/><rect x="8.0" y="0.5" width="3.5" height="3.3" fill="#2ecc71"/><rect x="4.5" y="3.8" width="3.5" height="3.3" fill="#2ecc71"/><rect x="11.5" y="3.8" width="3.5" height="3.3" fill="#2ecc71"/><rect x="1.0" y="7.1" width="3.5" height="3.3" fill="#2ecc71"/><rect x="8.0" y="7.1" width="3.5" height="3.3" fill="#2ecc71"/><rect x="4.5" y="10.399999999999999" width="3.5" height="3.3" fill="#2ecc71"/><rect x="11.5" y="10.399999999999999" width="3.5" height="3.3" fill="#2ecc71"/></svg>
<div class="b" style="left:1563.2px;top:560px;width:19.3px;height:18px;background:#2b2b2b;border-radius:4px;box-shadow:0 0 0 0.8px #3a3a3a;"></div>
<svg class="b" style="left:1566px;top:562px;" width="14" height="14" viewBox="0 0 14 14"><rect x="5.6" y="0" width="2.8" height="14" rx="0.6" transform="rotate(0 7 7)" fill="#e8e8e8"/><rect x="5.6" y="0" width="2.8" height="14" rx="0.6" transform="rotate(45 7 7)" fill="#e8e8e8"/><rect x="5.6" y="0" width="2.8" height="14" rx="0.6" transform="rotate(90 7 7)" fill="#e8e8e8"/><rect x="5.6" y="0" width="2.8" height="14" rx="0.6" transform="rotate(135 7 7)" fill="#e8e8e8"/><circle cx="7" cy="7" r="4.8" fill="#e8e8e8"/><circle cx="7" cy="7" r="2.1" fill="#2b2b2b"/></svg>
<!-- right -->
<div class="b" style="left:1593px;top:85px;width:321px;height:22px;background:#1c1c1c;"></div>
<div class="b" style="left:1593px;top:85px;width:40px;height:22px;background:#464646;border-radius:4px 4px 0 0;"></div>
<div class="t" style="top:88.5px;color:#f0f0f0;left:1598px;letter-spacing:0.165px;">Color</div>
<div class="b" style="left:1634px;top:85px;width:69px;height:22px;background:#282828;border-radius:4px 4px 0 0;"></div>
<div class="t" style="top:88.5px;color:#e8e8e8;left:1639px;letter-spacing:-0.270px;">Add Layers</div>
<div class="b" style="left:1593px;top:107px;width:321px;height:377px;background:#464646;"></div>
<div class="b" style="left:1593px;top:107px;width:307px;height:160px;overflow:hidden;"><div class="b" style="left:52.7px;top:-47.3px;width:200.4px;height:200.4px;border-radius:50%;background:conic-gradient(from 90deg,#ff0000,#ff00ff,#0000ff,#00ffff,#00ff00,#ffff00,#ff0000);-webkit-mask:radial-gradient(circle closest-side,transparent 74.5%,#000 75.5%,#000 99.3%,transparent 100%);mask:radial-gradient(circle closest-side,transparent 74.5%,#000 75.5%,#000 99.3%,transparent 100%);"></div><div class="b" style="left:109px;top:9px;width:90px;height:90px;background:linear-gradient(to right,#000,rgba(0,0,0,0)),linear-gradient(to bottom,#fff,#ff00a4);"></div></div>
<svg class="b" style="left:1785px;top:171.5px;" width="13" height="13" viewBox="0 0 13 13"><circle cx="6.5" cy="6.5" r="5.6" fill="none" stroke="#f0f0f0" stroke-width="1"/></svg>
<svg class="b" style="left:1807.5px;top:208px;" width="13" height="13" viewBox="0 0 13 13"><circle cx="6.5" cy="6.5" r="5.6" fill="none" stroke="#f0f0f0" stroke-width="1"/></svg>
<div class="b" style="left:1900px;top:107px;width:14px;height:377px;background:#2b2b2b;"></div>
<div class="b" style="left:1902.5px;top:153px;width:9px;height:303px;background:#4c4c4c;border-radius:4.5px;"></div>
<div class="b" style="left:1600px;top:273px;width:22px;height:22px;background:#fd4fbf;border-radius:3px;"></div>
<div class="t" style="top:277px;color:#f0f0f0;left:1625px;letter-spacing:-0.019px;">Hot Pink</div>
<div class="b" style="left:1871.5px;top:273.5px;width:21px;height:21px;background:#262626;border-radius:4px;box-shadow:0 0 0 0.8px #1e1e1e;"></div>
<svg class="b" style="left:1875px;top:277px;" width="14" height="14" viewBox="0 0 14 14"><path d="M1.4 12.6 L2.2 10.2 L7.6 4.8 L9.2 6.4 L3.8 11.8 Z" fill="none" stroke="#c8c8c8" stroke-width="1"/><path d="M7.4 3.4 L10.6 6.6 L12.6 4.6 A2 2 0 0 0 9.6 1.6 Z" fill="#e8e8e8"/></svg>
<div class="b" style="left:1600px;top:300.5px;width:49px;height:17px;background:#4e4e4e;border-radius:3px;border:1px solid #5c5c5c;"></div>
<div class="t" style="top:301.5px;color:#f0f0f0;left:1603px;letter-spacing:-0.147px;">Hex</div>
<svg class="b" style="left:1632px;top:301px;" width="16" height="16" viewBox="0 0 16 16"><path d="M4.4 6.2 L8 9.8 L11.6 6.2" stroke="#c8c8c8" stroke-width="1.1" fill="none"/></svg>
<div class="b" style="left:1653px;top:298px;width:240px;height:22px;background:#262626;border-radius:3px;"></div>
<div class="t" style="top:301.5px;color:#5a5a5a;left:1658px;">#</div>
<div class="t" style="top:301.5px;color:#f0f0f0;left:1670px;letter-spacing:0.413px;">fd4fbf</div>
<div class="b" style="left:1600px;top:330px;width:236px;height:4px;background:#e0e0e0;border-radius:2px;"></div>
<svg class="b" style="left:1827.5px;top:325.5px;" width="13" height="13" viewBox="0 0 13 13"><circle cx="6.5" cy="6.5" r="5.4" fill="#74c8b0"/><circle cx="6.5" cy="6.5" r="1.8" fill="#4a9a88"/></svg>
<div class="b" style="left:1849px;top:324px;width:44px;height:16px;background:#262626;border-radius:3px;"></div>
<div class="t" style="top:324.5px;color:#5a5a5a;left:1853px;">A</div>
<div class="t" style="top:324.5px;color:#f0f0f0;left:1866px;letter-spacing:0.126px;">255</div>
<div class="b" style="left:1597px;top:346px;width:299px;height:22px;background:#262626;"></div>
<div class="b" style="left:1599px;top:348px;width:148px;height:20px;background:#464646;border-radius:5px 5px 0 0;"></div>
<div class="t" style="top:350px;color:#f0f0f0;left:1673px;transform:translateX(-50%);letter-spacing:-0.253px;">Swatches</div>
<div class="t" style="top:350px;color:#c0c0c0;left:1820px;transform:translateX(-50%);letter-spacing:0.019px;">Generator</div>
<div class="b" style="left:1598px;top:371px;width:257px;height:18px;background:#5a5a5a;border-radius:4px;"></div>
<div class="b" style="left:1599px;top:372px;width:62px;height:16px;background:#262626;border-radius:3px;"></div>
<svg class="b" style="left:1605px;top:375px;" width="12" height="10" viewBox="0 0 12 10"><path d="M1.2 0.6 V9.4 M4.2 0.6 V9.4 M6.6 0.8 L10 9.2" stroke="#2ecc71" stroke-width="1.7"/></svg>
<div class="t" style="top:372.5px;color:#f4f4f4;left:1621px;letter-spacing:0.046px;">Library</div>
<svg class="b" style="left:1670px;top:374px;" width="12" height="11" viewBox="0 0 12 11"><path d="M0.8 1.2 H4.6 L5.8 2.6 H10.4" fill="none" stroke="#e0e0e0" stroke-width="1.1"/><rect x="0.6" y="3.4" width="10.2" height="7" rx="0.8" fill="#e0e0e0"/><path d="M2.4 5.6 H3.4 M4.6 5.6 H9 M2.4 7.8 H3.4 M4.6 7.8 H9" stroke="#5a5a5a" stroke-width="1"/></svg>
<div class="t" style="top:372.5px;color:#f4f4f4;left:1686px;letter-spacing:0.022px;">Project</div>
<svg class="b" style="left:1738px;top:374px;" width="10" height="12" viewBox="0 0 10 12"><path d="M1 0.8 H6 L9 3.8 V11 H1 Z M6 0.8 V3.8 H9" fill="none" stroke="#e0e0e0" stroke-width="1.1"/></svg>
<div class="t" style="top:372.5px;color:#f4f4f4;left:1752px;letter-spacing:-0.605px;">Scene</div>
<svg class="b" style="left:1800px;top:374px;" width="12" height="12" viewBox="0 0 12 12"><path d="M3.2 1 H8.8 A2.2 2.2 0 0 1 11 3.2 V6 L6.4 11 H3.2 A2.2 2.2 0 0 1 1 8.8 V3.2 A2.2 2.2 0 0 1 3.2 1 Z M11 6 H8 A1.6 1.6 0 0 0 6.4 7.6 V11" fill="none" stroke="#e0e0e0" stroke-width="1.1"/></svg>
<div class="t" style="top:372.5px;color:#f4f4f4;left:1816px;letter-spacing:-0.344px;">Labels</div>
<div class="b" style="left:1858px;top:371px;width:37px;height:18px;background:#5a5a5a;border-radius:4px;"></div>
<div class="b" style="left:1859px;top:372px;width:16px;height:16px;background:#262626;border-radius:3px;"></div>
<svg class="b" style="left:1862.5px;top:375.5px;" width="9" height="9" viewBox="0 0 9 9"><rect x="0" y="0" width="3.4" height="3.4" fill="#2ecc71"/><rect x="0" y="5.4" width="3.4" height="3.4" fill="#2ecc71"/><rect x="5.4" y="0" width="3.4" height="3.4" fill="#2ecc71"/><rect x="5.4" y="5.4" width="3.4" height="3.4" fill="#2ecc71"/></svg>
<svg class="b" style="left:1880px;top:375px;" width="12" height="10" viewBox="0 0 12 10"><path d="M0.5 1.2 H11.5 M0.5 5 H11.5 M0.5 8.8 H11.5" stroke="#e8e8e8" stroke-width="1.1"/></svg>
<div class="b" style="left:1598px;top:392.5px;width:275px;height:16.5px;background:#4e4e4e;border-radius:3px;border:1px solid #5a5a5a;"></div>
<div class="t" style="top:394px;color:#f0f0f0;left:1601px;letter-spacing:-0.105px;">new</div>
<svg class="b" style="left:1856px;top:393px;" width="16" height="16" viewBox="0 0 16 16"><path d="M4.2 6.1 L8 9.9 L11.8 6.1" stroke="#d0d0d0" stroke-width="1.1" fill="none"/></svg>
<div class="b" style="left:1880.5px;top:400px;width:2px;height:2px;background:#e8e8e8;"></div>
<div class="b" style="left:1885.5px;top:400px;width:2px;height:2px;background:#e8e8e8;"></div>
<div class="b" style="left:1890.5px;top:400px;width:2px;height:2px;background:#e8e8e8;"></div>
<div class="b" style="left:1598px;top:410px;width:297px;height:74px;background:#262626;"></div>
<div class="b" style="left:1600px;top:412px;width:18px;height:18px;background:#8b4dff;border-radius:3px;"></div>
<div class="b" style="left:1622px;top:412px;width:18px;height:18px;background:#4f9dff;border-radius:3px;"></div>
<div class="b" style="left:1644px;top:412px;width:18px;height:18px;background:#ff7550;border-radius:3px;"></div>
<div class="b" style="left:1666px;top:412px;width:18px;height:18px;background:#50fdb0;border-radius:3px;"></div>
<div class="b" style="left:1688px;top:412px;width:18px;height:18px;background:#ff5060;border-radius:3px;"></div>
<div class="b" style="left:1710px;top:412px;width:18px;height:18px;background:#ff50c0;border-radius:3px;"></div>
<div class="b" style="left:1593px;top:484px;width:321px;height:6px;background:#141414;"></div>
<div class="b" style="left:1593px;top:490px;width:321px;height:22px;background:#1c1c1c;"></div>
<div class="b" style="left:1593px;top:490px;width:38px;height:22px;background:#464646;border-radius:4px 4px 0 0;"></div>
<div class="t" style="top:493.5px;color:#f0f0f0;left:1598px;letter-spacing:0.083px;">Align</div>
<div class="b" style="left:1593px;top:512px;width:321px;height:68px;background:#464646;"></div>
<div class="b" style="left:1593px;top:580px;width:321px;height:6px;background:#141414;"></div>
<div class="t" style="top:524px;color:#f0f0f0;left:1601px;letter-spacing:0.049px;">Alignment</div>
<div class="t" style="top:552px;color:#f0f0f0;left:1601px;letter-spacing:0.290px;">Distribution</div>
<div class="b" style="left:1790px;top:522.5px;width:54px;height:17px;background:#262626;border-radius:4px;box-shadow:inset 0 0 0 0.9px #3c3c3c, 0 0 0 0.5px #242424;"></div>
<div class="b" style="left:1807.6px;top:522.5px;width:1px;height:17px;background:#1c1c1c;"></div>
<div class="b" style="left:1825.6px;top:522.5px;width:1px;height:17px;background:#1c1c1c;"></div>
<svg class="b" style="left:1790px;top:522.5px;" width="18" height="17" viewBox="0 0 18 17"><path d="M3.4 2.4 V14.6" stroke="#ececec" stroke-width="1.2"/><path d="M6 6 H11.6 M6 11 H15" stroke="#ececec" stroke-width="1.7"/></svg>
<svg class="b" style="left:1808px;top:522.5px;" width="18" height="17" viewBox="0 0 18 17"><path d="M9 2.4 V14.6" stroke="#ececec" stroke-width="1.2"/><path d="M5.4 6 H12.6 M3.2 11 H14.8" stroke="#ececec" stroke-width="1.7"/></svg>
<svg class="b" style="left:1826px;top:522.5px;" width="18" height="17" viewBox="0 0 18 17"><path d="M14.6 2.4 V14.6" stroke="#ececec" stroke-width="1.2"/><path d="M6.4 6 H12 M3 11 H12" stroke="#ececec" stroke-width="1.7"/></svg>
<div class="b" style="left:1852px;top:522.5px;width:54px;height:17px;background:#262626;border-radius:4px;box-shadow:inset 0 0 0 0.9px #3c3c3c, 0 0 0 0.5px #242424;"></div>
<div class="b" style="left:1869.6px;top:522.5px;width:1px;height:17px;background:#1c1c1c;"></div>
<div class="b" style="left:1887.6px;top:522.5px;width:1px;height:17px;background:#1c1c1c;"></div>
<svg class="b" style="left:1852px;top:522.5px;" width="18" height="17" viewBox="0 0 18 17"><path d="M2.6 3 H15.4" stroke="#ececec" stroke-width="1.2"/><path d="M6.4 5.4 V14.6 M11.6 5.4 V10" stroke="#ececec" stroke-width="1.7"/></svg>
<svg class="b" style="left:1870px;top:522.5px;" width="18" height="17" viewBox="0 0 18 17"><path d="M2.6 8.5 H15.4" stroke="#ececec" stroke-width="1.2"/><path d="M6.4 3 V14 M11.6 5 V12" stroke="#ececec" stroke-width="1.7"/></svg>
<svg class="b" style="left:1888px;top:522.5px;" width="18" height="17" viewBox="0 0 18 17"><path d="M2.6 14.4 H15.4" stroke="#ececec" stroke-width="1.2"/><path d="M6.4 8 V12 M11.6 3 V12" stroke="#ececec" stroke-width="1.7"/></svg>
<div class="b" style="left:1790px;top:550.5px;width:54px;height:17px;background:#262626;border-radius:4px;box-shadow:inset 0 0 0 0.9px #3c3c3c, 0 0 0 0.5px #242424;"></div>
<div class="b" style="left:1807.6px;top:550.5px;width:1px;height:17px;background:#1c1c1c;"></div>
<div class="b" style="left:1825.6px;top:550.5px;width:1px;height:17px;background:#1c1c1c;"></div>
<svg class="b" style="left:1790px;top:550.5px;" width="18" height="17" viewBox="0 0 18 17"><path d="M3.2 2 V15 M14.8 2 V15" stroke="#ececec" stroke-width="1.1"/><path d="M9 5 V12" stroke="#ececec" stroke-width="2"/></svg>
<svg class="b" style="left:1808px;top:550.5px;" width="18" height="17" viewBox="0 0 18 17"><path d="M2.4 2.6 H15.6 M2.4 14.4 H15.6" stroke="#ececec" stroke-width="1.1"/><path d="M4.6 8.5 H13.4" stroke="#ececec" stroke-width="2"/></svg>
<svg class="b" style="left:1826px;top:550.5px;" width="18" height="17" viewBox="0 0 18 17"><path d="M2.6 6 V2.6 H6 M12 2.6 H15.4 V6 M15.4 11 V14.4 H12 M6 14.4 H2.6 V11" fill="none" stroke="#ececec" stroke-width="1.1"/><path d="M5.8 9 V12 M9.2 7 V10 M12.4 5 V8" stroke="#ececec" stroke-width="1.8"/></svg>
<!-- scene -->
<div class="b" style="left:494px;top:586px;width:1420px;height:22px;background:#1c1c1c;"></div>
<div class="b" style="left:494px;top:586px;width:89px;height:22px;background:#464646;border-radius:4px 4px 0 0;"></div>
<div class="t" style="top:589.5px;color:#f0f0f0;left:499.5px;letter-spacing:-0.170px;">Scene Window</div>
<div class="b" style="left:584px;top:586px;width:100px;height:22px;background:#282828;border-radius:4px 4px 0 0;"></div>
<div class="t" style="top:589.5px;color:#f0f0f0;left:589.5px;letter-spacing:-0.112px;">JavaScript Editor</div>
<div class="b" style="left:685px;top:586px;width:112px;height:22px;background:#282828;border-radius:4px 4px 0 0;"></div>
<div class="t" style="top:589.5px;color:#f0f0f0;left:690.5px;letter-spacing:-0.179px;">Dependency Graph</div>
<div class="b" style="left:494px;top:608px;width:1420px;height:22px;background:#2b2b2b;"></div>
<div class="t" style="top:611.5px;color:#b8b8b8;left:723px;transform:translateX(-50%);letter-spacing:-0.054px;">Composition 1</div>
<svg class="b" style="left:948px;top:612px;" width="16" height="16" viewBox="0 0 16 16"><path d="M4.6 4.6 L11.4 11.4 M11.4 4.6 L4.6 11.4" stroke="#b0b0b0" stroke-width="1" fill="none"/></svg>
<div class="b" style="left:969px;top:614px;width:1px;height:11px;background:#b0b0b0;"></div>
<div class="t" style="top:611.5px;color:#b8b8b8;left:1193px;transform:translateX(-50%);letter-spacing:-0.054px;">Composition 2</div>
<svg class="b" style="left:1417.5px;top:612px;" width="16" height="16" viewBox="0 0 16 16"><path d="M4.6 4.6 L11.4 11.4 M11.4 4.6 L4.6 11.4" stroke="#b0b0b0" stroke-width="1" fill="none"/></svg>
<div class="b" style="left:1438px;top:610px;width:471px;height:20px;background:#464646;border-radius:5px 5px 0 0;"></div>
<div class="t" style="top:611.5px;color:#f0f0f0;left:1663px;transform:translateX(-50%);letter-spacing:-0.054px;">Composition 3</div>
<svg class="b" style="left:1888px;top:612px;" width="16" height="16" viewBox="0 0 16 16"><path d="M4.6 4.6 L11.4 11.4 M11.4 4.6 L4.6 11.4" stroke="#c0c0c0" stroke-width="1" fill="none"/></svg>
<div class="b" style="left:494px;top:630px;width:490px;height:42px;background:#464646;"></div>
<div class="b" style="left:497px;top:632px;width:279px;height:20px;background:#2a2a2a;border-radius:10.0px;"></div>
<svg class="b" style="left:500px;top:634px;" width="16" height="16" viewBox="0 0 16 16"><circle cx="6" cy="7.2" r="4.2" fill="none" stroke="#d8d8d8" stroke-width="1"/><path d="M9.2 10.4 L12.4 13.6" stroke="#d8d8d8" stroke-width="1.7" stroke-linecap="round"/></svg>
<div class="t" style="top:635px;color:#8c8c8c;left:521.3px;letter-spacing:-0.260px;">Enter a layer name</div>
<div class="b" style="left:778.5px;top:633px;width:19px;height:18px;background:#262626;border-radius:4px;box-shadow:inset 0 0 0 0.9px #3c3c3c, 0 0 0 0.5px #242424;"></div>
<svg class="b" style="left:781px;top:635px;" width="14" height="14" viewBox="0 0 14 14"><path d="M7 2 V12 M2 7 H12" stroke="#f0f0f0" stroke-width="1.8"/><path d="M14 11 V14 H11 Z" fill="#58b98a"/></svg>
<div class="b" style="left:822.5px;top:633px;width:19px;height:18px;background:#262626;border-radius:4px;box-shadow:inset 0 0 0 0.9px #3c3c3c, 0 0 0 0.5px #242424;"></div>
<div class="b" style="left:844.5px;top:633px;width:19px;height:18px;background:#262626;border-radius:4px;box-shadow:inset 0 0 0 0.9px #3c3c3c, 0 0 0 0.5px #242424;"></div>
<div class="b" style="left:866.5px;top:633px;width:19px;height:18px;background:#262626;border-radius:4px;box-shadow:inset 0 0 0 0.9px #3c3c3c, 0 0 0 0.5px #242424;"></div>
<svg class="b" style="left:824.5px;top:635px;" width="15" height="14" viewBox="0 0 15 14"><circle cx="9.6" cy="5.4" r="4.2" fill="#e0e0e0"/><path d="M2.4 6.4 A6 6 0 0 0 9 12.4 M4.6 4.6 A5 5 0 0 0 8.6 10.4" fill="none" stroke="#8a8a8a" stroke-width="1.3"/></svg>
<svg class="b" style="left:846.5px;top:634.5px;" width="15" height="15" viewBox="0 0 15 15"><path d="M9 4.6 C9.4 7.6 10.4 8.6 13.4 9 C10.4 9.4 9.4 10.4 9 13.4 C8.6 10.4 7.6 9.4 4.6 9 C7.6 8.6 8.6 7.6 9 4.6 Z" fill="#e8e8e8"/><circle cx="2.6" cy="2.4" r="1.1" fill="#e8e8e8"/><circle cx="8.4" cy="1.6" r="0.9" fill="#e8e8e8"/><circle cx="12.6" cy="3.4" r="1" fill="#e8e8e8"/><circle cx="2" cy="8" r="0.9" fill="#e8e8e8"/><circle cx="4.4" cy="12" r="1" fill="#e8e8e8"/><path d="M15 12 V15 H12 Z" fill="#58b98a"/></svg>
<svg class="b" style="left:868.5px;top:635px;" width="15" height="14" viewBox="0 0 15 14"><path d="M1 2.6 H4.6 M8.4 2.6 H14 M1 7 H8 M11.8 7 H14 M1 11.4 H3.6 M7.4 11.4 H14" stroke="#e0e0e0" stroke-width="1"/><circle cx="6.5" cy="2.6" r="1.5" fill="none" stroke="#e0e0e0" stroke-width="1"/><circle cx="9.9" cy="7" r="1.5" fill="none" stroke="#e0e0e0" stroke-width="1"/><circle cx="5.5" cy="11.4" r="1.5" fill="none" stroke="#e0e0e0" stroke-width="1"/><path d="M15 11.4 V14 H12.4 Z" fill="#58b98a"/></svg>
<div class="b" style="left:888px;top:632px;width:94px;height:20px;background:#2a2a2a;border-radius:3px;"></div>
<div class="t" style="top:634.5px;color:#565656;left:893px;">F</div>
<div class="t" style="top:634.5px;color:#f0f0f0;left:905px;">223</div>
<svg class="b" style="left:499.5px;top:656px;" width="11" height="13" viewBox="0 0 11 13"><path d="M3 6 V4 A2.5 2.5 0 0 1 8 4 V6" fill="none" stroke="#d8d8d8" stroke-width="1.3"/><rect x="1.2" y="6" width="8.6" height="6.4" rx="0.8" fill="#d8d8d8"/><rect x="5" y="8" width="1.2" height="2.4" fill="#464646"/></svg>
<svg class="b" style="left:517px;top:658px;" width="14" height="10" viewBox="0 0 14 10"><path d="M0.6 5 C3 1 11 1 13.4 5 C11 9 3 9 0.6 5 Z" fill="none" stroke="#d8d8d8" stroke-width="1"/><circle cx="7" cy="5" r="2.1" fill="#d8d8d8"/></svg>
<svg class="b" style="left:536.5px;top:656px;" width="13" height="14" viewBox="0 0 13 14"><path d="M6.5 0.8 L12.2 3.8 V10.2 L6.5 13.2 L0.8 10.2 V3.8 Z M0.8 3.8 L6.5 6.8 L12.2 3.8 M6.5 6.8 V13.2" fill="none" stroke="#d8d8d8" stroke-width="1"/></svg>
<svg class="b" style="left:555px;top:657px;" width="14" height="12" viewBox="0 0 14 12"><path d="M0.6 4 H3.4 L7 0.8 V11.2 L3.4 8 H0.6 Z" fill="#d8d8d8"/><path d="M8.8 3.4 Q10.4 6 8.8 8.6 M10.8 1.6 Q13.6 6 10.8 10.4" fill="none" stroke="#d8d8d8" stroke-width="1.1"/></svg>
<svg class="b" style="left:574px;top:656px;" width="14" height="14" viewBox="0 0 14 14"><path d="M1.4 12.6 L2.2 10.2 L7.6 4.8 L9.2 6.4 L3.8 11.8 Z" fill="#9a9a9a"/><path d="M7.4 3.4 L10.6 6.6 L12.6 4.6 A2 2 0 0 0 9.6 1.6 Z" fill="#d8d8d8"/></svg>
<svg class="b" style="left:591.7px;top:657px;" width="16" height="12" viewBox="0 0 16 12"><path d="M1.2 6 L4.8 2.2 H15 V9.8 H4.8 Z" fill="#d8d8d8"/><circle cx="5.6" cy="6" r="1.7" fill="#2e2e2e"/></svg>
<div class="t" style="top:655.5px;color:#f0f0f0;left:649px;letter-spacing:-0.302px;">Name</div>
<div class="b" style="left:494px;top:672px;width:476px;height:220px;background:#3a3a3a;"></div>
<div class="b" style="left:494px;top:892px;width:476px;height:71px;background:#333333;"></div>
<div class="b" style="left:970px;top:672px;width:14px;height:303px;background:#2b2b2b;"></div>
<div class="b" style="left:972.5px;top:673px;width:9px;height:289px;background:#4a4a4a;border-radius:4.5px;"></div>
<div class="b" style="left:496px;top:674px;width:18px;height:18px;background:#2a2a2a;border-radius:2px;"></div>
<div class="b" style="left:515px;top:674px;width:18px;height:18px;background:#2a2a2a;border-radius:2px;"></div>
<svg class="b" style="left:517.5px;top:676px;" width="14" height="14" viewBox="0 0 14 14"><circle cx="6.6" cy="7.4" r="4.8" fill="none" stroke="#d8d8d8" stroke-width="1.1"/><path d="M4.2 7.2 L6.4 9.4 L12 2.6" fill="none" stroke="#d8d8d8" stroke-width="1.4"/></svg>
<div class="b" style="left:573px;top:675px;width:16px;height:16px;background:#6fe09a;border-radius:3px;"></div>
<svg class="b" style="left:591.7px;top:677px;" width="16" height="12" viewBox="0 0 16 12"><path d="M1.2 6 L4.8 2.2 H15 V9.8 H4.8 Z" fill="#d8d8d8"/><circle cx="5.6" cy="6" r="1.7" fill="#2e2e2e"/></svg>
<div class="b" style="left:610px;top:675px;width:32px;height:16px;background:#353535;border-radius:2px;"></div>
<div class="b" style="left:610px;top:675px;width:15px;height:16px;background:#323232;border-radius:2px;"></div>
<svg class="b" style="left:610px;top:675px;" width="16" height="16" viewBox="0 0 16 16"><path d="M4.8 6.4 L8 9.6 L11.2 6.4" stroke="#9a9a9a" stroke-width="1.1" fill="none"/></svg>
<svg class="b" style="left:648px;top:675px;" width="16" height="16" viewBox="0 0 16 16"><rect x="1" y="7" width="8.6" height="8" fill="#9ccbff"/><path d="M6.4 4.6 V10.4 H12" fill="none" stroke="#e8e8e8" stroke-width="1"/><path d="M8.6 1.6 H15 M8.6 4 H15 M8.6 6.4 H15" stroke="#e8e8e8" stroke-width="1"/></svg>
<div class="t" style="top:675.5px;color:#f0f0f0;left:667px;letter-spacing:0.107px;">Color Array</div>
<div class="b" style="left:930px;top:675px;width:10px;height:16px;background:#2b2b2b;border-radius:3px 0 0 3px;"></div>
<div class="b" style="left:941px;top:675px;width:10px;height:16px;background:#2b2b2b;border-radius:0 3px 3px 0;"></div>
<svg class="b" style="left:931.5px;top:679px;" width="8" height="8" viewBox="0 0 8 8"><path d="M0.5 4 L3.5 0.8 H7 V7.2 H3.5 Z" fill="#d6b866"/></svg>
<svg class="b" style="left:942.5px;top:679px;" width="8" height="8" viewBox="0 0 8 8"><path d="M7.5 4 L4.5 0.8 H1 V7.2 H4.5 Z" fill="#c855e8"/></svg>
<svg class="b" style="left:955px;top:677px;" width="12" height="12" viewBox="0 0 12 12"><circle cx="6" cy="6" r="4.2" fill="none" stroke="#808080" stroke-width="1.1"/></svg>
<div class="b" style="left:496px;top:696px;width:18px;height:18px;background:#2a2a2a;border-radius:2px;"></div>
<div class="b" style="left:515px;top:696px;width:18px;height:18px;background:#2a2a2a;border-radius:2px;"></div>
<svg class="b" style="left:517.5px;top:698px;" width="14" height="14" viewBox="0 0 14 14"><circle cx="6.6" cy="7.4" r="4.8" fill="none" stroke="#d8d8d8" stroke-width="1.1"/><path d="M4.2 7.2 L6.4 9.4 L12 2.6" fill="none" stroke="#d8d8d8" stroke-width="1.4"/></svg>
<div class="b" style="left:573px;top:697px;width:16px;height:16px;background:#cdf07e;border-radius:3px;"></div>
<svg class="b" style="left:591.7px;top:699px;" width="16" height="12" viewBox="0 0 16 12"><path d="M1.2 6 L4.8 2.2 H15 V9.8 H4.8 Z" fill="#d8d8d8"/><circle cx="5.6" cy="6" r="1.7" fill="#2e2e2e"/></svg>
<svg class="b" style="left:667px;top:698px;" width="15" height="15" viewBox="0 0 15 15"><path d="M0.30000000000000004 0.5000000000000002 L3.7 3.9000000000000004 M3.7 0.5000000000000002 L0.30000000000000004 3.9000000000000004" stroke="#7fd88a" stroke-width="1"/><path d="M9.700000000000001 0.5000000000000002 L13.1 3.9000000000000004 M13.1 0.5000000000000002 L9.700000000000001 3.9000000000000004" stroke="#7fd88a" stroke-width="1"/><path d="M4.8999999999999995 5.3 L8.299999999999999 8.7 M8.299999999999999 5.3 L4.8999999999999995 8.7" stroke="#7fd88a" stroke-width="1"/><path d="M0.7 10.100000000000001 L4.1 13.5 M4.1 10.100000000000001 L0.7 13.5" stroke="#7fd88a" stroke-width="1"/><path d="M9.3 9.100000000000001 L12.7 12.5 M12.7 9.100000000000001 L9.3 12.5" stroke="#7fd88a" stroke-width="1"/></svg>
<div class="t" style="top:697.5px;color:#f0f0f0;left:686px;letter-spacing:-0.201px;">Random [Index]</div>
<div class="b" style="left:930px;top:697px;width:10px;height:16px;background:#2b2b2b;border-radius:3px 0 0 3px;"></div>
<div class="b" style="left:941px;top:697px;width:10px;height:16px;background:#2b2b2b;border-radius:0 3px 3px 0;"></div>
<svg class="b" style="left:931.5px;top:701px;" width="8" height="8" viewBox="0 0 8 8"><path d="M0.5 4 L3.5 0.8 H7 V7.2 H3.5 Z" fill="#808080"/></svg>
<svg class="b" style="left:942.5px;top:701px;" width="8" height="8" viewBox="0 0 8 8"><path d="M7.5 4 L4.5 0.8 H1 V7.2 H4.5 Z" fill="#c855e8"/></svg>
<svg class="b" style="left:955px;top:699px;" width="12" height="12" viewBox="0 0 12 12"><circle cx="6" cy="6" r="4.2" fill="none" stroke="#808080" stroke-width="1.1"/></svg>
<div class="b" style="left:496px;top:718px;width:18px;height:18px;background:#2a2a2a;border-radius:2px;"></div>
<div class="b" style="left:515px;top:718px;width:18px;height:18px;background:#2a2a2a;border-radius:2px;"></div>
<svg class="b" style="left:517.5px;top:720px;" width="14" height="14" viewBox="0 0 14 14"><circle cx="6.6" cy="7.4" r="4.8" fill="none" stroke="#d8d8d8" stroke-width="1.1"/><path d="M4.2 7.2 L6.4 9.4 L12 2.6" fill="none" stroke="#d8d8d8" stroke-width="1.4"/></svg>
<div class="b" style="left:573px;top:719px;width:16px;height:16px;background:#cdf07e;border-radius:3px;"></div>
<svg class="b" style="left:591.7px;top:721px;" width="16" height="12" viewBox="0 0 16 12"><path d="M1.2 6 L4.8 2.2 H15 V9.8 H4.8 Z" fill="#d8d8d8"/><circle cx="5.6" cy="6" r="1.7" fill="#2e2e2e"/></svg>
<svg class="b" style="left:647px;top:721px;" width="18" height="12" viewBox="0 0 18 12"><path d="M0.5 6.5 C2 6.5 2.6 1.8 4.3 1.8 C6.4 1.8 6.6 10.6 8.8 10.6 C11 10.6 11.2 1.8 13.3 1.8 C15.2 1.8 15.6 8.2 17.5 9.2" fill="none" stroke="#7fd88a" stroke-width="1.15"/></svg>
<div class="t" style="top:719.5px;color:#f0f0f0;left:667px;letter-spacing:-0.058px;">Oscillator [Position.Z] Cosine</div>
<div class="b" style="left:930px;top:719px;width:10px;height:16px;background:#2b2b2b;border-radius:3px 0 0 3px;"></div>
<div class="b" style="left:941px;top:719px;width:10px;height:16px;background:#2b2b2b;border-radius:0 3px 3px 0;"></div>
<svg class="b" style="left:931.5px;top:723px;" width="8" height="8" viewBox="0 0 8 8"><path d="M0.5 4 L3.5 0.8 H7 V7.2 H3.5 Z" fill="#d6b866"/></svg>
<svg class="b" style="left:942.5px;top:723px;" width="8" height="8" viewBox="0 0 8 8"><path d="M7.5 4 L4.5 0.8 H1 V7.2 H4.5 Z" fill="#c855e8"/></svg>
<svg class="b" style="left:955px;top:721px;" width="12" height="12" viewBox="0 0 12 12"><circle cx="6" cy="6" r="4.2" fill="none" stroke="#808080" stroke-width="1.1"/></svg>
<div class="b" style="left:496px;top:740px;width:18px;height:18px;background:#2a2a2a;border-radius:2px;"></div>
<div class="b" style="left:515px;top:740px;width:18px;height:18px;background:#2a2a2a;border-radius:2px;"></div>
<svg class="b" style="left:517.5px;top:742px;" width="14" height="14" viewBox="0 0 14 14"><circle cx="6.6" cy="7.4" r="4.8" fill="none" stroke="#d8d8d8" stroke-width="1.1"/><path d="M4.2 7.2 L6.4 9.4 L12 2.6" fill="none" stroke="#d8d8d8" stroke-width="1.4"/></svg>
<div class="b" style="left:573px;top:741px;width:16px;height:16px;background:#cdf07e;border-radius:3px;"></div>
<svg class="b" style="left:591.7px;top:743px;" width="16" height="12" viewBox="0 0 16 12"><path d="M1.2 6 L4.8 2.2 H15 V9.8 H4.8 Z" fill="#d8d8d8"/><circle cx="5.6" cy="6" r="1.7" fill="#2e2e2e"/></svg>
<svg class="b" style="left:647px;top:743px;" width="18" height="12" viewBox="0 0 18 12"><path d="M0.5 6.5 C2 6.5 2.6 1.8 4.3 1.8 C6.4 1.8 6.6 10.6 8.8 10.6 C11 10.6 11.2 1.8 13.3 1.8 C15.2 1.8 15.6 8.2 17.5 9.2" fill="none" stroke="#7fd88a" stroke-width="1.15"/></svg>
<div class="t" style="top:741.5px;color:#f0f0f0;left:667px;letter-spacing:-0.049px;">Oscillator [Position.X] Sine Driver</div>
<div class="b" style="left:930px;top:741px;width:10px;height:16px;background:#2b2b2b;border-radius:3px 0 0 3px;"></div>
<div class="b" style="left:941px;top:741px;width:10px;height:16px;background:#2b2b2b;border-radius:0 3px 3px 0;"></div>
<svg class="b" style="left:931.5px;top:745px;" width="8" height="8" viewBox="0 0 8 8"><path d="M0.5 4 L3.5 0.8 H7 V7.2 H3.5 Z" fill="#d6b866"/></svg>
<svg class="b" style="left:942.5px;top:745px;" width="8" height="8" viewBox="0 0 8 8"><path d="M7.5 4 L4.5 0.8 H1 V7.2 H4.5 Z" fill="#c855e8"/></svg>
<div class="b" style="left:930px;top:741px;width:10px;height:16px;border-radius:2px;border:1px solid #d6b866;"></div>
<svg class="b" style="left:955px;top:743px;" width="12" height="12" viewBox="0 0 12 12"><circle cx="6" cy="6" r="4.2" fill="none" stroke="#808080" stroke-width="1.1"/></svg>
<div class="b" style="left:496px;top:762px;width:18px;height:18px;background:#2a2a2a;border-radius:2px;"></div>
<div class="b" style="left:515px;top:762px;width:18px;height:18px;background:#2a2a2a;border-radius:2px;"></div>
<svg class="b" style="left:517.5px;top:764px;" width="14" height="14" viewBox="0 0 14 14"><circle cx="6.6" cy="7.4" r="4.8" fill="none" stroke="#d8d8d8" stroke-width="1.1"/><path d="M4.2 7.2 L6.4 9.4 L12 2.6" fill="none" stroke="#d8d8d8" stroke-width="1.4"/></svg>
<div class="b" style="left:573px;top:763px;width:16px;height:16px;background:#6a90e8;border-radius:3px;"></div>
<svg class="b" style="left:591.7px;top:765px;" width="16" height="12" viewBox="0 0 16 12"><path d="M1.2 6 L4.8 2.2 H15 V9.8 H4.8 Z" fill="#d8d8d8"/><circle cx="5.6" cy="6" r="1.7" fill="#2e2e2e"/></svg>
<svg class="b" style="left:648px;top:762px;" width="16" height="17" viewBox="0 0 16 17"><rect x="1" y="5.4" width="9.6" height="10" fill="#a8d4ff"/><rect x="5" y="7.4" width="1.8" height="6.6" fill="#3a5a80"/><path d="M11.6 0.4 C11.8 2.4 12.4 3 14.4 3.2 C12.4 3.4 11.8 4 11.6 6 C11.4 4 10.8 3.4 8.8 3.2 C10.8 3 11.4 2.4 11.6 0.4 Z" fill="#f0f0f0"/></svg>
<div class="t" style="top:763.5px;color:#f0f0f0;left:667px;letter-spacing:-0.024px;">Index Context [Number]</div>
<div class="b" style="left:930px;top:763px;width:10px;height:16px;background:#2b2b2b;border-radius:3px 0 0 3px;"></div>
<div class="b" style="left:941px;top:763px;width:10px;height:16px;background:#2b2b2b;border-radius:0 3px 3px 0;"></div>
<svg class="b" style="left:931.5px;top:767px;" width="8" height="8" viewBox="0 0 8 8"><path d="M0.5 4 L3.5 0.8 H7 V7.2 H3.5 Z" fill="#808080"/></svg>
<svg class="b" style="left:942.5px;top:767px;" width="8" height="8" viewBox="0 0 8 8"><path d="M7.5 4 L4.5 0.8 H1 V7.2 H4.5 Z" fill="#c855e8"/></svg>
<svg class="b" style="left:955px;top:765px;" width="12" height="12" viewBox="0 0 12 12"><circle cx="6" cy="6" r="4.2" fill="none" stroke="#808080" stroke-width="1.1"/></svg>
<div class="b" style="left:496px;top:784px;width:18px;height:18px;background:#2a2a2a;border-radius:2px;"></div>
<div class="b" style="left:515px;top:784px;width:18px;height:18px;background:#2a2a2a;border-radius:2px;"></div>
<svg class="b" style="left:517.5px;top:786px;" width="14" height="14" viewBox="0 0 14 14"><circle cx="6.6" cy="7.4" r="4.8" fill="none" stroke="#d8d8d8" stroke-width="1.1"/><path d="M4.2 7.2 L6.4 9.4 L12 2.6" fill="none" stroke="#d8d8d8" stroke-width="1.4"/></svg>
<div class="b" style="left:573px;top:785px;width:16px;height:16px;background:#6a90e8;border-radius:3px;"></div>
<svg class="b" style="left:591.7px;top:787px;" width="16" height="12" viewBox="0 0 16 12"><path d="M1.2 6 L4.8 2.2 H15 V9.8 H4.8 Z" fill="#d8d8d8"/><circle cx="5.6" cy="6" r="1.7" fill="#2e2e2e"/></svg>
<svg class="b" style="left:647px;top:786px;" width="17" height="14" viewBox="0 0 17 14"><text x="0.5" y="7.4" font-family="Liberation Sans" font-size="8.2" fill="#b8d8ff" textLength="15">abc</text><path d="M0.5 5.2 H16" stroke="#b8d8ff" stroke-width="0.8"/><path d="M0.5 11.6 H16" stroke="#d8d8d8" stroke-width="1" stroke-dasharray="3.4 1.2"/></svg>
<div class="t" style="top:785.5px;color:#f0f0f0;left:667px;letter-spacing:-0.050px;">String Generator [String]</div>
<div class="b" style="left:930px;top:785px;width:10px;height:16px;background:#2b2b2b;border-radius:3px 0 0 3px;"></div>
<div class="b" style="left:941px;top:785px;width:10px;height:16px;background:#2b2b2b;border-radius:0 3px 3px 0;"></div>
<svg class="b" style="left:931.5px;top:789px;" width="8" height="8" viewBox="0 0 8 8"><path d="M0.5 4 L3.5 0.8 H7 V7.2 H3.5 Z" fill="#d6b866"/></svg>
<svg class="b" style="left:942.5px;top:789px;" width="8" height="8" viewBox="0 0 8 8"><path d="M7.5 4 L4.5 0.8 H1 V7.2 H4.5 Z" fill="#c855e8"/></svg>
<svg class="b" style="left:955px;top:787px;" width="12" height="12" viewBox="0 0 12 12"><circle cx="6" cy="6" r="4.2" fill="none" stroke="#808080" stroke-width="1.1"/></svg>
<div class="b" style="left:496px;top:806px;width:18px;height:18px;background:#2a2a2a;border-radius:2px;"></div>
<div class="b" style="left:515px;top:806px;width:18px;height:18px;background:#2a2a2a;border-radius:2px;"></div>
<svg class="b" style="left:517.5px;top:808px;" width="14" height="14" viewBox="0 0 14 14"><circle cx="6.6" cy="7.4" r="4.8" fill="none" stroke="#d8d8d8" stroke-width="1.1"/><path d="M4.2 7.2 L6.4 9.4 L12 2.6" fill="none" stroke="#d8d8d8" stroke-width="1.4"/></svg>
<div class="b" style="left:573px;top:807px;width:16px;height:16px;background:#cdf07e;border-radius:3px;"></div>
<svg class="b" style="left:591.7px;top:809px;" width="16" height="12" viewBox="0 0 16 12"><path d="M1.2 6 L4.8 2.2 H15 V9.8 H4.8 Z" fill="#d8d8d8"/><circle cx="5.6" cy="6" r="1.7" fill="#2e2e2e"/></svg>
<svg class="b" style="left:647px;top:806px;" width="18" height="18" viewBox="0 0 18 18"><path d="M3.4 2 V14.4 H15" fill="none" stroke="#e0e0e0" stroke-width="1"/><path d="M3.4 14.4 L10.4 8" stroke="#e0e0e0" stroke-width="1"/><path d="M1.4 3.6 L3.4 1.2 L5.4 3.6 M13.2 12.2 L15.6 14.4 L13.2 16.6 M8 8 H10.6 V10.6" fill="none" stroke="#6fd88a" stroke-width="1"/></svg>
<div class="t" style="top:807.5px;color:#f0f0f0;left:667px;letter-spacing:0.156px;">3D Matrix [Duplicator]</div>
<div class="b" style="left:930px;top:807px;width:10px;height:16px;background:#2b2b2b;border-radius:3px 0 0 3px;"></div>
<div class="b" style="left:941px;top:807px;width:10px;height:16px;background:#2b2b2b;border-radius:0 3px 3px 0;"></div>
<svg class="b" style="left:931.5px;top:811px;" width="8" height="8" viewBox="0 0 8 8"><path d="M0.5 4 L3.5 0.8 H7 V7.2 H3.5 Z" fill="#d6b866"/></svg>
<svg class="b" style="left:942.5px;top:811px;" width="8" height="8" viewBox="0 0 8 8"><path d="M7.5 4 L4.5 0.8 H1 V7.2 H4.5 Z" fill="#c855e8"/></svg>
<div class="b" style="left:941px;top:807px;width:10px;height:16px;border-radius:2px;border:1px solid #c855e8;"></div>
<svg class="b" style="left:955px;top:809px;" width="12" height="12" viewBox="0 0 12 12"><circle cx="6" cy="6" r="4.2" fill="none" stroke="#808080" stroke-width="1.1"/></svg>
<div class="b" style="left:497px;top:827px;width:470.5px;height:20px;background:#5a5440;border-radius:4px;"></div>
<div class="b" style="left:496px;top:828px;width:18px;height:18px;background:#2a2a2a;border-radius:2px;"></div>
<div class="b" style="left:515px;top:828px;width:18px;height:18px;background:#2a2a2a;border-radius:2px;"></div>
<div class="b" style="left:534px;top:828px;width:18px;height:18px;background:#2a2a2a;border-radius:2px;"></div>
<svg class="b" style="left:517px;top:832px;" width="14" height="10" viewBox="0 0 14 10"><path d="M0.6 5 C3 1 11 1 13.4 5 C11 9 3 9 0.6 5 Z" fill="none" stroke="#d8d8d8" stroke-width="1"/><circle cx="7" cy="5" r="2.1" fill="#d8d8d8"/></svg>
<div class="b" style="left:573px;top:829px;width:16px;height:16px;background:#ffe77a;border-radius:3px;"></div>
<svg class="b" style="left:591.7px;top:831px;" width="16" height="12" viewBox="0 0 16 12"><path d="M1.2 6 L4.8 2.2 H15 V9.8 H4.8 Z" fill="#d8d8d8"/><circle cx="5.6" cy="6" r="1.7" fill="#2e2e2e"/></svg>
<svg class="b" style="left:648px;top:830px;" width="14" height="14" viewBox="0 0 14 14"><rect x="1" y="1" width="2" height="2" fill="#e8d060"/><rect x="6" y="1" width="2" height="2" fill="#e8d060"/><rect x="11" y="1" width="2" height="2" fill="#e8d060"/><rect x="1" y="6" width="2" height="2" fill="#e8d060"/><rect x="6" y="6" width="2" height="2" fill="#e8d060"/><rect x="11" y="6" width="2" height="2" fill="#e8d060"/><rect x="1" y="11" width="2" height="2" fill="#e8d060"/><rect x="6" y="11" width="2" height="2" fill="#e8d060"/><rect x="11" y="11" width="2" height="2" fill="#e8d060"/></svg>
<div class="t" style="top:829.5px;color:#f0f0f0;left:667px;letter-spacing:0.148px;">Duplicator</div>
<div class="b" style="left:930px;top:829px;width:10px;height:16px;background:#2b2b2b;border-radius:3px 0 0 3px;"></div>
<div class="b" style="left:941px;top:829px;width:10px;height:16px;background:#2b2b2b;border-radius:0 3px 3px 0;"></div>
<svg class="b" style="left:931.5px;top:833px;" width="8" height="8" viewBox="0 0 8 8"><path d="M0.5 4 L3.5 0.8 H7 V7.2 H3.5 Z" fill="#d6b866"/></svg>
<svg class="b" style="left:942.5px;top:833px;" width="8" height="8" viewBox="0 0 8 8"><path d="M7.5 4 L4.5 0.8 H1 V7.2 H4.5 Z" fill="#c855e8"/></svg>
<svg class="b" style="left:955px;top:831px;" width="12" height="12" viewBox="0 0 12 12"><circle cx="6" cy="6" r="4.2" fill="none" stroke="#808080" stroke-width="1.1"/></svg>
<div class="b" style="left:496px;top:850px;width:18px;height:18px;background:#2a2a2a;border-radius:2px;"></div>
<div class="b" style="left:515px;top:850px;width:18px;height:18px;background:#2a2a2a;border-radius:2px;"></div>
<div class="b" style="left:534px;top:850px;width:18px;height:18px;background:#2a2a2a;border-radius:2px;"></div>
<div class="b" style="left:573px;top:851px;width:16px;height:16px;background:#ffe77a;border-radius:3px;"></div>
<svg class="b" style="left:591.7px;top:853px;" width="16" height="12" viewBox="0 0 16 12"><path d="M1.2 6 L4.8 2.2 H15 V9.8 H4.8 Z" fill="#d8d8d8"/><circle cx="5.6" cy="6" r="1.7" fill="#2e2e2e"/></svg>
<div class="b" style="left:610px;top:851px;width:32px;height:16px;background:#353535;border-radius:2px;"></div>
<div class="b" style="left:610px;top:851px;width:15px;height:16px;background:#323232;border-radius:2px;"></div>
<svg class="b" style="left:610px;top:851px;" width="16" height="16" viewBox="0 0 16 16"><path d="M4.8 6.4 L8 9.6 L11.2 6.4" stroke="#9a9a9a" stroke-width="1.1" fill="none"/></svg>
<svg class="b" style="left:648px;top:852px;" width="14" height="14" viewBox="0 0 14 14"><rect x="1.4" y="1.4" width="11.2" height="11.2" fill="none" stroke="#e8d060" stroke-width="1" stroke-dasharray="6.4 2.4" stroke-dashoffset="-1.2"/><rect x="0" y="0" width="2.4" height="2.4" fill="#f4f4f4"/><rect x="11.6" y="0" width="2.4" height="2.4" fill="#f4f4f4"/><rect x="0" y="11.6" width="2.4" height="2.4" fill="#f4f4f4"/><rect x="11.6" y="11.6" width="2.4" height="2.4" fill="#f4f4f4"/></svg>
<div class="t" style="top:851.5px;color:#a0a0a0;left:667px;letter-spacing:-0.429px;">Ellipse Shape</div>
<div class="b" style="left:930px;top:851px;width:10px;height:16px;background:#2b2b2b;border-radius:3px 0 0 3px;"></div>
<div class="b" style="left:941px;top:851px;width:10px;height:16px;background:#2b2b2b;border-radius:0 3px 3px 0;"></div>
<svg class="b" style="left:931.5px;top:855px;" width="8" height="8" viewBox="0 0 8 8"><path d="M0.5 4 L3.5 0.8 H7 V7.2 H3.5 Z" fill="#d6b866"/></svg>
<svg class="b" style="left:942.5px;top:855px;" width="8" height="8" viewBox="0 0 8 8"><path d="M7.5 4 L4.5 0.8 H1 V7.2 H4.5 Z" fill="#c855e8"/></svg>
<div class="b" style="left:941px;top:851px;width:10px;height:16px;border-radius:2px;border:1px solid #c855e8;"></div>
<svg class="b" style="left:955px;top:853px;" width="12" height="12" viewBox="0 0 12 12"><circle cx="6" cy="6" r="4.2" fill="none" stroke="#808080" stroke-width="1.1"/></svg>
<div class="b" style="left:496px;top:872px;width:18px;height:18px;background:#2a2a2a;border-radius:2px;"></div>
<div class="b" style="left:515px;top:872px;width:18px;height:18px;background:#2a2a2a;border-radius:2px;"></div>
<div class="b" style="left:534px;top:872px;width:18px;height:18px;background:#2a2a2a;border-radius:2px;"></div>
<svg class="b" style="left:517px;top:876px;" width="14" height="10" viewBox="0 0 14 10"><path d="M0.6 5 C3 1 11 1 13.4 5 C11 9 3 9 0.6 5 Z" fill="none" stroke="#484848" stroke-width="1"/><circle cx="7" cy="5" r="2.1" fill="#484848"/></svg>
<div class="b" style="left:573px;top:873px;width:16px;height:16px;background:#b893ff;border-radius:3px;"></div>
<svg class="b" style="left:591.7px;top:875px;" width="16" height="12" viewBox="0 0 16 12"><path d="M1.2 6 L4.8 2.2 H15 V9.8 H4.8 Z" fill="#d8d8d8"/><circle cx="5.6" cy="6" r="1.7" fill="#2e2e2e"/></svg>
<svg class="b" style="left:667px;top:873px;" width="16" height="16" viewBox="0 0 16 16"><rect x="1.2" y="1.2" width="13.6" height="13.6" fill="none" stroke="#e8e8e8" stroke-width="0.9"/><path d="M4.6 4.4 H11.4 M8 4.4 V12" stroke="#e8d060" stroke-width="2"/><rect x="0" y="0" width="2" height="2" fill="#f4f4f4"/><rect x="14" y="0" width="2" height="2" fill="#f4f4f4"/><rect x="0" y="14" width="2" height="2" fill="#f4f4f4"/><rect x="14" y="14" width="2" height="2" fill="#f4f4f4"/></svg>
<div class="t" style="top:873.5px;color:#a0a0a0;left:686px;letter-spacing:-0.097px;">Cavalry</div>
<div class="b" style="left:930px;top:873px;width:10px;height:16px;background:#2b2b2b;border-radius:3px 0 0 3px;"></div>
<div class="b" style="left:941px;top:873px;width:10px;height:16px;background:#2b2b2b;border-radius:0 3px 3px 0;"></div>
<svg class="b" style="left:931.5px;top:877px;" width="8" height="8" viewBox="0 0 8 8"><path d="M0.5 4 L3.5 0.8 H7 V7.2 H3.5 Z" fill="#d6b866"/></svg>
<svg class="b" style="left:942.5px;top:877px;" width="8" height="8" viewBox="0 0 8 8"><path d="M7.5 4 L4.5 0.8 H1 V7.2 H4.5 Z" fill="#9a9a9a"/></svg>
<svg class="b" style="left:955px;top:875px;" width="12" height="12" viewBox="0 0 12 12"><circle cx="6" cy="6" r="4.2" fill="none" stroke="#808080" stroke-width="1.1"/></svg>
<div class="b" style="left:540px;top:736px;width:378px;height:26.5px;border:3px solid #b8e61e;"></div>
<div class="b" style="left:494px;top:963px;width:476px;height:12px;background:#2b2b2b;"></div>
<div class="b" style="left:494.5px;top:964px;width:474px;height:10px;background:#4a4a4a;border-radius:5px;"></div>
<div class="b" style="left:494px;top:975.5px;width:490px;height:23px;background:#464646;"></div>
<div class="b" style="left:497.5px;top:978px;width:18.5px;height:18px;background:#262626;border-radius:4px;box-shadow:inset 0 0 0 0.9px #3c3c3c, 0 0 0 0.5px #242424;"></div>
<svg class="b" style="left:498.5px;top:981px;" width="16" height="12" viewBox="0 0 16 12"><path d="M1.2 6 L4.8 2.2 H15 V9.8 H4.8 Z" fill="#e8e8e8"/><circle cx="5.6" cy="6" r="1.7" fill="#2e2e2e"/></svg>
<div class="t" style="top:979.5px;color:#f0f0f0;left:521px;letter-spacing:-0.290px;">1 selected</div>
<div class="b" style="left:775.5px;top:978px;width:18px;height:18px;background:#262626;border-radius:4px;box-shadow:inset 0 0 0 0.9px #3c3c3c, 0 0 0 0.5px #242424;"></div>
<svg class="b" style="left:778px;top:980.5px;" width="13" height="13" viewBox="0 0 13 13"><rect x="0.8" y="0.8" width="11.4" height="11.4" fill="none" stroke="#e0e0e0" stroke-width="1.1"/><rect x="4.8" y="4.8" width="3.4" height="3.4" fill="#e0e0e0"/></svg>
<div class="b" style="left:798px;top:978px;width:183px;height:18px;background:#5a5a5a;border-radius:4px;"></div>
<div class="b" style="left:799px;top:979px;width:86px;height:16px;background:#262626;border-radius:3px;"></div>
<svg class="b" style="left:804px;top:981px;" width="13" height="12" viewBox="0 0 13 12"><path d="M0.8 1.6 H11.6 M3 6 H11.6 M0.8 10.4 H9" stroke="#2ecc71" stroke-width="1.9"/></svg>
<div class="t" style="top:979.5px;color:#f4f4f4;left:821px;letter-spacing:-0.009px;">Time Editor</div>
<svg class="b" style="left:892px;top:980px;" width="14" height="14" viewBox="0 0 14 14"><path d="M2.4 1 V12.4 H13.4" fill="none" stroke="#b8b8b8" stroke-width="1.1"/><path d="M2.4 12.4 L12 4.4 M5 12.4 L9.6 1.8" stroke="#b8b8b8" stroke-width="1"/></svg>
<div class="t" style="top:979.5px;color:#f4f4f4;left:910px;letter-spacing:-0.053px;">Graph Editor</div>
<div class="b" style="left:986.5px;top:807px;width:1.4px;height:1.4px;background:#6a6a6a;"></div>
<div class="b" style="left:986.5px;top:810px;width:1.4px;height:1.4px;background:#6a6a6a;"></div>
<div class="b" style="left:986.5px;top:813px;width:1.4px;height:1.4px;background:#6a6a6a;"></div>
<div class="b" style="left:986.5px;top:816px;width:1.4px;height:1.4px;background:#6a6a6a;"></div>
<div class="b" style="left:986.5px;top:819px;width:1.4px;height:1.4px;background:#6a6a6a;"></div>
<div class="b" style="left:986.5px;top:822px;width:1.4px;height:1.4px;background:#6a6a6a;"></div>
<div class="b" style="left:986.5px;top:825px;width:1.4px;height:1.4px;background:#6a6a6a;"></div>
<!-- timeline -->
<div class="b" style="left:991px;top:630px;width:923px;height:345px;background:#2b2b2b;"></div>
<div class="b" style="left:991px;top:630px;width:923px;height:24.5px;background:#262626;"></div>
<svg class="b" style="left:991px;top:630px;" width="923" height="24.5" viewBox="0 0 923 24.5"><rect x="8.35" y="16" width="1.3" height="8.5" fill="#8a8a8a"/><rect x="19.26" y="20" width="1.2" height="4.5" fill="#a8a8a8"/><rect x="30.12" y="20" width="1.2" height="4.5" fill="#a8a8a8"/><rect x="40.99" y="20" width="1.2" height="4.5" fill="#a8a8a8"/><rect x="51.85" y="20" width="1.2" height="4.5" fill="#a8a8a8"/><rect x="62.66" y="16" width="1.3" height="8.5" fill="#b4b4b4"/><rect x="73.57" y="20" width="1.2" height="4.5" fill="#a8a8a8"/><rect x="84.44" y="20" width="1.2" height="4.5" fill="#a8a8a8"/><rect x="95.30" y="20" width="1.2" height="4.5" fill="#a8a8a8"/><rect x="106.16" y="20" width="1.2" height="4.5" fill="#a8a8a8"/><rect x="116.97" y="16" width="1.3" height="8.5" fill="#b4b4b4"/><rect x="127.89" y="20" width="1.2" height="4.5" fill="#a8a8a8"/><rect x="138.75" y="20" width="1.2" height="4.5" fill="#a8a8a8"/><rect x="149.61" y="20" width="1.2" height="4.5" fill="#a8a8a8"/><rect x="160.47" y="20" width="1.2" height="4.5" fill="#a8a8a8"/><rect x="171.29" y="16" width="1.3" height="8.5" fill="#b4b4b4"/><rect x="182.20" y="20" width="1.2" height="4.5" fill="#a8a8a8"/><rect x="193.06" y="20" width="1.2" height="4.5" fill="#a8a8a8"/><rect x="203.92" y="20" width="1.2" height="4.5" fill="#a8a8a8"/><rect x="214.79" y="20" width="1.2" height="4.5" fill="#a8a8a8"/><rect x="225.60" y="16" width="1.3" height="8.5" fill="#b4b4b4"/><rect x="236.51" y="20" width="1.2" height="4.5" fill="#a8a8a8"/><rect x="247.37" y="20" width="1.2" height="4.5" fill="#a8a8a8"/><rect x="258.24" y="20" width="1.2" height="4.5" fill="#a8a8a8"/><rect x="269.10" y="20" width="1.2" height="4.5" fill="#a8a8a8"/><rect x="279.91" y="16" width="1.3" height="8.5" fill="#b4b4b4"/><rect x="290.82" y="20" width="1.2" height="4.5" fill="#a8a8a8"/><rect x="301.68" y="20" width="1.2" height="4.5" fill="#a8a8a8"/><rect x="312.55" y="20" width="1.2" height="4.5" fill="#a8a8a8"/><rect x="323.41" y="20" width="1.2" height="4.5" fill="#a8a8a8"/><rect x="334.22" y="16" width="1.3" height="8.5" fill="#b4b4b4"/><rect x="345.13" y="20" width="1.2" height="4.5" fill="#a8a8a8"/><rect x="356.00" y="20" width="1.2" height="4.5" fill="#a8a8a8"/><rect x="366.86" y="20" width="1.2" height="4.5" fill="#a8a8a8"/><rect x="377.72" y="20" width="1.2" height="4.5" fill="#a8a8a8"/><rect x="388.53" y="16" width="1.3" height="8.5" fill="#b4b4b4"/><rect x="399.45" y="20" width="1.2" height="4.5" fill="#a8a8a8"/><rect x="410.31" y="20" width="1.2" height="4.5" fill="#a8a8a8"/><rect x="421.17" y="20" width="1.2" height="4.5" fill="#a8a8a8"/><rect x="432.03" y="20" width="1.2" height="4.5" fill="#a8a8a8"/><rect x="442.85" y="16" width="1.3" height="8.5" fill="#b4b4b4"/><rect x="453.76" y="20" width="1.2" height="4.5" fill="#a8a8a8"/><rect x="464.62" y="20" width="1.2" height="4.5" fill="#a8a8a8"/><rect x="475.48" y="20" width="1.2" height="4.5" fill="#a8a8a8"/><rect x="486.35" y="20" width="1.2" height="4.5" fill="#a8a8a8"/><rect x="497.16" y="16" width="1.3" height="8.5" fill="#b4b4b4"/><rect x="508.07" y="20" width="1.2" height="4.5" fill="#a8a8a8"/><rect x="518.93" y="20" width="1.2" height="4.5" fill="#a8a8a8"/><rect x="529.80" y="20" width="1.2" height="4.5" fill="#a8a8a8"/><rect x="540.66" y="20" width="1.2" height="4.5" fill="#a8a8a8"/><rect x="551.47" y="16" width="1.3" height="8.5" fill="#b4b4b4"/><rect x="562.38" y="20" width="1.2" height="4.5" fill="#a8a8a8"/><rect x="573.24" y="20" width="1.2" height="4.5" fill="#a8a8a8"/><rect x="584.11" y="20" width="1.2" height="4.5" fill="#a8a8a8"/><rect x="594.97" y="20" width="1.2" height="4.5" fill="#a8a8a8"/><rect x="605.78" y="16" width="1.3" height="8.5" fill="#b4b4b4"/><rect x="616.69" y="20" width="1.2" height="4.5" fill="#a8a8a8"/><rect x="627.56" y="20" width="1.2" height="4.5" fill="#a8a8a8"/><rect x="638.42" y="20" width="1.2" height="4.5" fill="#a8a8a8"/><rect x="649.28" y="20" width="1.2" height="4.5" fill="#a8a8a8"/><rect x="660.09" y="16" width="1.3" height="8.5" fill="#b4b4b4"/><rect x="671.01" y="20" width="1.2" height="4.5" fill="#a8a8a8"/><rect x="681.87" y="20" width="1.2" height="4.5" fill="#a8a8a8"/><rect x="692.73" y="20" width="1.2" height="4.5" fill="#a8a8a8"/><rect x="703.59" y="20" width="1.2" height="4.5" fill="#a8a8a8"/><rect x="714.41" y="16" width="1.3" height="8.5" fill="#b4b4b4"/><rect x="725.32" y="20" width="1.2" height="4.5" fill="#a8a8a8"/><rect x="736.18" y="20" width="1.2" height="4.5" fill="#a8a8a8"/><rect x="747.04" y="20" width="1.2" height="4.5" fill="#a8a8a8"/><rect x="757.91" y="20" width="1.2" height="4.5" fill="#a8a8a8"/><rect x="768.72" y="16" width="1.3" height="8.5" fill="#b4b4b4"/><rect x="779.63" y="20" width="1.2" height="4.5" fill="#a8a8a8"/><rect x="790.49" y="20" width="1.2" height="4.5" fill="#a8a8a8"/><rect x="801.36" y="20" width="1.2" height="4.5" fill="#a8a8a8"/><rect x="812.22" y="20" width="1.2" height="4.5" fill="#a8a8a8"/><rect x="823.03" y="16" width="1.3" height="8.5" fill="#b4b4b4"/><rect x="833.94" y="20" width="1.2" height="4.5" fill="#a8a8a8"/><rect x="844.80" y="20" width="1.2" height="4.5" fill="#a8a8a8"/><rect x="855.67" y="20" width="1.2" height="4.5" fill="#a8a8a8"/><rect x="866.53" y="20" width="1.2" height="4.5" fill="#a8a8a8"/><rect x="877.34" y="16" width="1.3" height="8.5" fill="#b4b4b4"/><rect x="888.25" y="20" width="1.2" height="4.5" fill="#a8a8a8"/><rect x="899.12" y="20" width="1.2" height="4.5" fill="#a8a8a8"/><rect x="909.98" y="20" width="1.2" height="4.5" fill="#a8a8a8"/><rect x="920.84" y="20" width="1.2" height="4.5" fill="#a8a8a8"/></svg>
<div class="t" style="top:630.5px;color:#f0f0f0;left:994.7px;">0</div>
<div class="t" style="top:630.5px;color:#f0f0f0;left:1054.312px;transform:translateX(-50%);">15</div>
<div class="t" style="top:630.5px;color:#f0f0f0;left:1108.624px;transform:translateX(-50%);">30</div>
<div class="t" style="top:630.5px;color:#f0f0f0;left:1162.936px;transform:translateX(-50%);">45</div>
<div class="t" style="top:630.5px;color:#f0f0f0;left:1217.248px;transform:translateX(-50%);">60</div>
<div class="t" style="top:630.5px;color:#f0f0f0;left:1271.56px;transform:translateX(-50%);">75</div>
<div class="t" style="top:630.5px;color:#f0f0f0;left:1325.872px;transform:translateX(-50%);">90</div>
<div class="t" style="top:630.5px;color:#f0f0f0;left:1380.184px;transform:translateX(-50%);">105</div>
<div class="t" style="top:630.5px;color:#f0f0f0;left:1434.496px;transform:translateX(-50%);">120</div>
<div class="t" style="top:630.5px;color:#f0f0f0;left:1488.808px;transform:translateX(-50%);">135</div>
<div class="t" style="top:630.5px;color:#f0f0f0;left:1543.12px;transform:translateX(-50%);">150</div>
<div class="t" style="top:630.5px;color:#f0f0f0;left:1597.432px;transform:translateX(-50%);">165</div>
<div class="t" style="top:630.5px;color:#f0f0f0;left:1651.7440000000001px;transform:translateX(-50%);">180</div>
<div class="t" style="top:630.5px;color:#f0f0f0;left:1706.056px;transform:translateX(-50%);">195</div>
<div class="t" style="top:630.5px;color:#f0f0f0;left:1760.368px;transform:translateX(-50%);">210</div>
<div class="t" style="top:630.5px;color:#f0f0f0;left:1814.6799999999998px;transform:translateX(-50%);">225</div>
<div class="t" style="top:630.5px;color:#f0f0f0;left:1868.992px;transform:translateX(-50%);">240</div>
<div class="b" style="left:991px;top:654.5px;width:9px;height:16px;background:#1e1e1e;"></div>
<div class="b" style="left:1000px;top:654.5px;width:905px;height:15.7px;background:#464646;"></div>
<div class="b" style="left:995px;top:653px;width:5.2px;height:18px;background:#78c8b0;border-radius:1.5px;"></div>
<div class="b" style="left:1905px;top:653px;width:5.5px;height:18px;background:#78c8b0;border-radius:1.5px;"></div>
<div class="b" style="left:1000px;top:674px;width:905px;height:18px;border-radius:2px;background:repeating-linear-gradient(135deg,#74e2a0 0.85px,#74e2a0 1.75px,#82f0ac 1.95px,#82f0ac 2.75px,#60c488 2.95px,#66cc8e 5.45px,#66cc8e 13.85px,#90fcb8 14.15px,#90fcb8 15.75px,#74e2a0 16.45px,#74e2a0 25.88px);"></div>
<div class="t" style="top:674.5px;color:#1c2c22;left:1008px;letter-spacing:0.107px;">Color Array</div>
<div class="b" style="left:1000px;top:696px;width:905px;height:18px;border-radius:2px;background:repeating-linear-gradient(135deg,#d0f082 0.85px,#d0f082 1.75px,#e0fa8c 1.95px,#e0fa8c 2.75px,#b0d46c 2.95px,#b8da72 5.45px,#b8da72 13.85px,#f4ff92 14.15px,#f4ff92 15.75px,#d0f082 16.45px,#d0f082 25.88px);"></div>
<div class="t" style="top:696.5px;color:#2c3018;left:1008px;letter-spacing:-0.201px;">Random [Index]</div>
<div class="b" style="left:1000px;top:718px;width:905px;height:18px;border-radius:2px;background:repeating-linear-gradient(135deg,#d0f082 0.85px,#d0f082 1.75px,#e0fa8c 1.95px,#e0fa8c 2.75px,#b0d46c 2.95px,#b8da72 5.45px,#b8da72 13.85px,#f4ff92 14.15px,#f4ff92 15.75px,#d0f082 16.45px,#d0f082 25.88px);"></div>
<div class="t" style="top:718.5px;color:#2c3018;left:1008px;letter-spacing:-0.058px;">Oscillator [Position.Z] Cosine</div>
<div class="b" style="left:1000px;top:740px;width:905px;height:18px;border-radius:2px;background:repeating-linear-gradient(135deg,#d0f082 0.85px,#d0f082 1.75px,#e0fa8c 1.95px,#e0fa8c 2.75px,#b0d46c 2.95px,#b8da72 5.45px,#b8da72 13.85px,#f4ff92 14.15px,#f4ff92 15.75px,#d0f082 16.45px,#d0f082 25.88px);"></div>
<div class="t" style="top:740.5px;color:#2c3018;left:1008px;letter-spacing:-0.049px;">Oscillator [Position.X] Sine Driver</div>
<div class="b" style="left:1000px;top:762px;width:905px;height:18px;border-radius:2px;background:repeating-linear-gradient(135deg,#6a92ea 0.85px,#6a92ea 1.75px,#7aa2f8 1.95px,#7aa2f8 2.75px,#587cca 2.95px,#5e84d4 5.45px,#5e84d4 13.85px,#86b0ff 14.15px,#86b0ff 15.75px,#6a92ea 16.45px,#6a92ea 25.88px);"></div>
<div class="t" style="top:762.5px;color:#f4f4f4;left:1008px;text-shadow:0 0 0.5px #f4f4f4;letter-spacing:-0.024px;">Index Context [Number]</div>
<div class="b" style="left:1000px;top:784px;width:905px;height:18px;border-radius:2px;background:repeating-linear-gradient(135deg,#6a92ea 0.85px,#6a92ea 1.75px,#7aa2f8 1.95px,#7aa2f8 2.75px,#587cca 2.95px,#5e84d4 5.45px,#5e84d4 13.85px,#86b0ff 14.15px,#86b0ff 15.75px,#6a92ea 16.45px,#6a92ea 25.88px);"></div>
<div class="t" style="top:784.5px;color:#f4f4f4;left:1008px;text-shadow:0 0 0.5px #f4f4f4;letter-spacing:-0.050px;">String Generator [String]</div>
<div class="b" style="left:1000px;top:806px;width:905px;height:18px;border-radius:2px;background:repeating-linear-gradient(135deg,#d0f082 0.85px,#d0f082 1.75px,#e0fa8c 1.95px,#e0fa8c 2.75px,#b0d46c 2.95px,#b8da72 5.45px,#b8da72 13.85px,#f4ff92 14.15px,#f4ff92 15.75px,#d0f082 16.45px,#d0f082 25.88px);"></div>
<div class="t" style="top:806.5px;color:#2c3018;left:1008px;letter-spacing:0.156px;">3D Matrix [Duplicator]</div>
<div class="b" style="left:1000px;top:828.5px;width:905px;height:17.5px;border-radius:3px;box-shadow:0 0 0 1px #ffffff;background-color:#fff28a;background-image:radial-gradient(circle,#e6c456 0.5px,transparent 0.68px),radial-gradient(circle,#e6c456 0.5px,transparent 0.68px);background-size:2.3px 2.3px;background-position:0 0,1.15px 1.15px;"></div>
<div class="t" style="top:828.5px;color:#2c2810;left:1008px;letter-spacing:0.148px;">Duplicator</div>
<div class="b" style="left:1000px;top:850px;width:905px;height:18px;background:#ffe97e;border-radius:3px;"></div>
<div class="t" style="top:850.5px;color:#2c2810;left:1008px;letter-spacing:-0.429px;">Ellipse Shape</div>
<div class="b" style="left:1000px;top:872px;width:905px;height:18px;background:#b994fa;border-radius:3px;"></div>
<div class="t" style="top:872.5px;color:#f8f8f8;left:1008px;text-shadow:0 0 0.5px #fff;letter-spacing:-0.097px;">Cavalry</div>
<svg class="b" style="left:1799.4384px;top:643.5px;" width="16" height="9.5" viewBox="0 0 16 9.5"><path d="M0.6 0.4 H15.4 L8 9.2 Z" fill="#74c8b0"/></svg>
<div class="b" style="left:1806.9384px;top:652px;width:1px;height:310px;background:#5fbfa8;"></div>
<div class="b" style="left:1905px;top:672px;width:9px;height:291px;background:#242424;"></div>
<div class="b" style="left:991px;top:963px;width:923px;height:12px;background:#2b2b2b;"></div>
<div class="b" style="left:993px;top:964px;width:919px;height:10px;background:#4a4a4a;border-radius:5px;"></div>
<div class="b" style="left:991px;top:975.5px;width:923px;height:23px;background:#464646;"></div>
<svg class="b" style="left:996px;top:980px;" width="16" height="15" viewBox="0 0 16 15"><path d="M1 1.6 H12.6 M1 5.4 H12.6" stroke="#e8e8e8" stroke-width="1.5"/><path d="M1 9.4 H3.6 M5.4 9.4 H8 M9.8 9.4 H12.4 M1 12.6 H3.6" stroke="#e8e8e8" stroke-width="1.4"/><path d="M15.5 11.5 V14.5 H12.5 Z" fill="#58b98a"/></svg>
<div class="b" style="left:1014px;top:979px;width:151px;height:16px;background:#2d2d2d;border-radius:3px;"></div>
<div class="t" style="top:979.5px;color:#f0f0f0;left:1017px;letter-spacing:-0.071px;">Default Keyframe Layer</div>
<div class="b" style="left:1170.5px;top:979px;width:71px;height:16px;background:#2d2d2d;border-radius:3px;"></div>
<div class="t" style="top:979.5px;color:#565656;left:1175px;">F</div>
<div class="t" style="top:979px;color:#d0d0d0;left:1187px;">-</div>
<div class="t" style="top:979.5px;color:#f0f0f0;left:1247px;letter-spacing:-0.003px;">Align:</div>
<div class="b" style="left:1284px;top:979px;width:51.5px;height:16.5px;background:#262626;border-radius:3px;box-shadow:0 0 0 0.8px #1e1e1e;"></div>
<div class="b" style="left:1301px;top:979px;width:0.8px;height:16.5px;background:#1e1e1e;"></div>
<div class="b" style="left:1318.4px;top:979px;width:0.8px;height:16.5px;background:#1e1e1e;"></div>
<svg class="b" style="left:1284px;top:979px;" width="17" height="17" viewBox="0 0 17 17"><path d="M2.6 1.6 V15.4" stroke="#ececec" stroke-width="1.1"/><rect x="4.6" y="4.2" width="2" height="2" fill="#5fd0b4"/><rect x="7.4" y="4.4" width="3" height="1.6" fill="#ececec"/><rect x="4.6" y="10" width="2" height="2" fill="#5fd0b4"/><rect x="7.4" y="10.2" width="6.4" height="1.6" fill="#ececec"/></svg>
<svg class="b" style="left:1301.4px;top:979px;" width="17" height="17" viewBox="0 0 17 17"><path d="M8.5 1.2 V15.8" stroke="#ececec" stroke-width="1.1"/><rect x="7.3" y="4" width="2.4" height="2.4" fill="#5fd0b4"/><rect x="7.3" y="9.8" width="2.4" height="2.4" fill="#5fd0b4"/><path d="M4.4 5.2 H6.4 M10.6 5.2 H12.6 M3 11 H6.4 M10.6 11 H14" stroke="#ececec" stroke-width="1.6"/></svg>
<svg class="b" style="left:1318.8px;top:979px;" width="17" height="17" viewBox="0 0 17 17"><path d="M14.4 1.6 V15.4" stroke="#ececec" stroke-width="1.1"/><rect x="10.4" y="4.2" width="2" height="2" fill="#5fd0b4"/><rect x="6.6" y="4.4" width="3" height="1.6" fill="#ececec"/><rect x="10.4" y="10" width="2" height="2" fill="#5fd0b4"/><rect x="3.2" y="10.2" width="6.4" height="1.6" fill="#ececec"/></svg>
<div class="b" style="left:1341px;top:979px;width:16.5px;height:16.5px;background:#3a3a3a;border-radius:3px;box-shadow:0 0 0 0.8px #222;"></div>
<svg class="b" style="left:1341px;top:979px;" width="17" height="17" viewBox="0 0 17 17"><rect x="2.6" y="2.6" width="11.4" height="11.4" fill="none" stroke="#a8a8a8" stroke-width="1"/><rect x="7.4" y="7.4" width="1.8" height="1.8" fill="#ececec"/><rect x="1.6" y="1.6" width="2.2" height="2.2" fill="#c8c8c8"/><rect x="12.8" y="1.6" width="2.2" height="2.2" fill="#c8c8c8"/><rect x="1.6" y="12.8" width="2.2" height="2.2" fill="#c8c8c8"/><rect x="12.8" y="12.8" width="2.2" height="2.2" fill="#c8c8c8"/></svg>
<div class="b" style="left:1361.7px;top:978px;width:30.3px;height:18.5px;background:#2b2b2b;border-radius:4px;box-shadow:0 0 0 0.8px #222;"></div>
<div class="b" style="left:1361.7px;top:978px;width:18.6px;height:18.5px;background:#3a3a3a;border-radius:4px 0 0 4px;"></div>
<div class="b" style="left:1380.3px;top:978px;width:0.8px;height:18.5px;background:#252525;"></div>
<svg class="b" style="left:1383.7px;top:983.4px;" width="7" height="8" viewBox="0 0 7 8"><path d="M1 0.8 L6 4 L1 7.2 Z" fill="none" stroke="#9a9a9a" stroke-width="1"/></svg>
<svg class="b" style="left:1363.2px;top:980.4px;" width="16" height="14" viewBox="0 0 16 14"><path d="M4.4 12.4 L2.4 8.4 A4.6 4.6 0 0 1 10.4 3.8 L13.4 7.4 L11.6 8.8 L8.8 5.4 A2.3 2.3 0 0 0 4.8 7.4 L6.6 11.2 Z" fill="#ececec"/></svg>
<div class="b" style="left:1396.6px;top:978px;width:30.3px;height:18.5px;background:#2b2b2b;border-radius:4px;box-shadow:0 0 0 0.8px #222;"></div>
<div class="b" style="left:1396.6px;top:978px;width:18.6px;height:18.5px;background:#3a3a3a;border-radius:4px 0 0 4px;"></div>
<div class="b" style="left:1415.1999999999998px;top:978px;width:0.8px;height:18.5px;background:#252525;"></div>
<svg class="b" style="left:1418.6px;top:983.4px;" width="7" height="8" viewBox="0 0 7 8"><path d="M1 0.8 L6 4 L1 7.2 Z" fill="none" stroke="#9a9a9a" stroke-width="1"/></svg>
<svg class="b" style="left:1398px;top:980.4px;" width="16" height="14" viewBox="0 0 16 14"><path d="M7.6 0.4 V13.6" stroke="#ececec" stroke-width="1"/><path d="M5.2 4 V10 M10 4.6 V9.4" stroke="#ececec" stroke-width="0.9"/><path d="M0.6 7 H4 M11.2 7 H15" stroke="#ececec" stroke-width="1.1"/></svg>
<svg class="b" style="left:1742px;top:980px;" width="15" height="15" viewBox="0 0 15 15"><circle cx="6.4" cy="6.4" r="5" fill="none" stroke="#e0e0e0" stroke-width="1.1"/><path d="M4 6.4 H8.8" stroke="#e0e0e0" stroke-width="1.1"/><path d="M10.2 10.2 L13.6 13.6" stroke="#e0e0e0" stroke-width="1.7"/></svg>
<div class="b" style="left:1767px;top:985.5px;width:115px;height:3px;background:#585858;border-radius:1.5px;"></div>
<svg class="b" style="left:1760.5px;top:980.5px;" width="13" height="13" viewBox="0 0 13 13"><circle cx="6.5" cy="6.5" r="5.2" fill="#74c8b0"/><circle cx="6.5" cy="6.5" r="1.8" fill="#4a9a88"/></svg>
<svg class="b" style="left:1886px;top:980px;" width="15" height="15" viewBox="0 0 15 15"><circle cx="6.4" cy="6.4" r="5" fill="none" stroke="#e0e0e0" stroke-width="1.1"/><path d="M4 6.4 H8.8 M6.4 4 V8.8" stroke="#e0e0e0" stroke-width="1.1"/><path d="M10.2 10.2 L13.6 13.6" stroke="#e0e0e0" stroke-width="1.7"/></svg>
<!-- bottom -->
<div class="b" style="left:494px;top:998.5px;width:1420px;height:5.5px;background:#141414;"></div>
<div class="b" style="left:494px;top:1004px;width:1420px;height:22px;background:#3a3a3a;"></div>
<div class="b" style="left:498px;top:1009.5px;width:1.6px;height:1.6px;background:#8a8a8a;"></div>
<div class="b" style="left:498px;top:1013.5px;width:1.6px;height:1.6px;background:#8a8a8a;"></div>
<div class="b" style="left:498px;top:1017.5px;width:1.6px;height:1.6px;background:#8a8a8a;"></div>
<div class="b" style="left:507px;top:1006px;width:18px;height:18px;background:#262626;border-radius:4px;box-shadow:inset 0 0 0 0.9px #3c3c3c, 0 0 0 0.5px #242424;"></div>
<svg class="b" style="left:509px;top:1008px;" width="15" height="15" viewBox="0 0 15 15"><path d="M0.8 0.8 H12.4 V9.6 H9.4 L11 12.4 L6.4 9.6 H0.8 Z" fill="#e8e8e8"/><path d="M2.6 3 H10.6 M2.6 5.2 H10.6 M2.6 7.4 H10.6" stroke="#262626" stroke-width="0.9"/><path d="M15 11.6 V15 H11.6 Z" fill="#58b98a"/></svg>
<div class="b" style="left:527.5px;top:1008px;width:18.5px;height:14px;background:#d6b866;border-radius:2px;"></div>
<div class="t" style="top:1007.5px;color:#2a2410;font-size:11px;left:536.8px;transform:translateX(-50%);">0</div>
<div class="b" style="left:554.5px;top:1012.5px;width:5px;height:5px;background:#d6b866;border-radius:3px;"></div>
<div class="t" style="top:1007.5px;color:#f0f0f0;left:565px;letter-spacing:-0.288px;">You are working in an unsaved scene.</div>
<div class="b" style="left:1610px;top:1006.5px;width:80px;height:17.5px;background:#d6b866;border-radius:2px;"></div>
<div class="t" style="top:1007.5px;color:#2a2410;left:1615px;letter-spacing:-0.387px;">Feedback</div>
<svg class="b" style="left:1671px;top:1008.5px;" width="13" height="14" viewBox="0 0 13 14"><path d="M1 0.8 H8.6 L11.6 3.8 V13 H1 Z" fill="#f4f4f4"/><path d="M2.6 4 H8 M2.6 6.4 H9.6 M2.6 8.8 H6" stroke="#a0a0a0" stroke-width="0.8"/><path d="M5.4 12.4 L6 10 L10.6 5.4 L12.4 7.2 L7.8 11.8 Z" fill="#ff6a50"/></svg>
<div class="b" style="left:1693px;top:1006.5px;width:109px;height:17.5px;background:#2ecc71;border-radius:2px;"></div>
<div class="t" style="top:1007.5px;color:#0e2c18;left:1698px;letter-spacing:-0.191px;">Upgrade to Pro</div>
<svg class="b" style="left:1781px;top:1009.5px;" width="14" height="12" viewBox="0 0 14 12"><path d="M1.2 7 L2.6 3 L5.6 4 L6.4 8 C6.4 10.8 1.2 10.8 1.2 7 Z M12.8 7 L11.4 3 L8.4 4 L7.6 8 C7.6 10.8 12.8 10.8 12.8 7 Z" fill="#f2c838"/></svg>
<div class="b" style="left:1805px;top:1006.5px;width:106.5px;height:17.5px;background:#38a8f0;border-radius:2px;"></div>
<div class="t" style="top:1007.5px;color:#0c2038;left:1810px;letter-spacing:-0.296px;">Tips and Tricks</div>
<svg class="b" style="left:1893px;top:1008.5px;" width="14" height="14" viewBox="0 0 14 14"><path d="M12.8 1.2 C9 1 5.4 3.6 4 7.6 L6.4 10 C10.4 8.6 13 5 12.8 1.2 Z" fill="#e8e8f0"/><circle cx="9.2" cy="4.8" r="1.3" fill="#4a90e0"/><path d="M4 7.6 L1.6 7.8 L3.6 5.4 Z M6.4 10 L6.2 12.4 L8.6 10.4 Z" fill="#e04848"/><path d="M2.4 11.6 L4.2 9.8" stroke="#f0a030" stroke-width="1.6"/></svg>
</body></html>
